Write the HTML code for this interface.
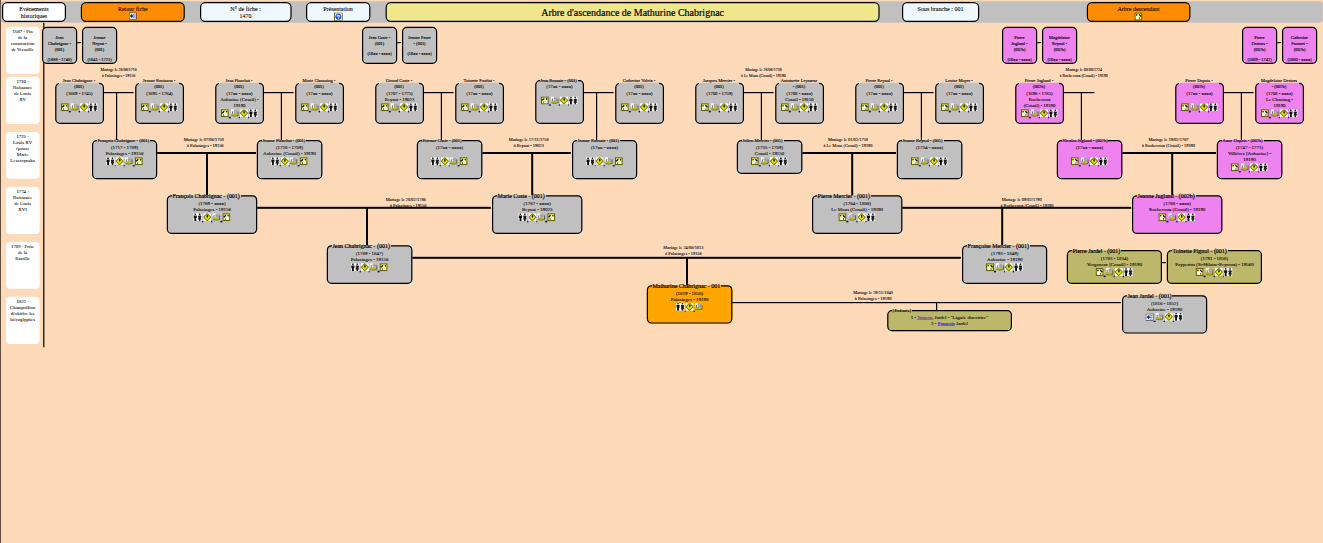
<!DOCTYPE html>
<html lang="fr"><head><meta charset="utf-8"><title>Arbre d'ascendance de Mathurine Chabrignac</title>
<style>
html,body{margin:0;padding:0;background:#ffdab9;overflow:hidden;}
body{width:1323px;height:543px;position:relative;font-family:"Liberation Serif",serif;color:#000;}
#pg{position:absolute;left:0;top:0;width:3308px;height:1358px;transform:scale(0.4);transform-origin:0 0;background:#ffdab9;font-size:13px;line-height:15px;}
#pg *{box-sizing:border-box;}
#pg{-webkit-text-stroke:0.2px;}
.g1,legend{-webkit-text-stroke:0.3px;}
.ev{-webkit-text-stroke:0.12px;}
.abs{position:absolute;}
.ln{position:absolute;background:#000;}
.bar{position:absolute;left:2px;top:3px;width:3305px;height:54px;background:#c0c0c0;border-radius:8px;}
.btn{position:absolute;top:5px;height:50px;border:3px solid #000;border-radius:13px;text-align:center;font-size:15px;line-height:17px;padding-top:7px;white-space:nowrap;}
.ev{position:absolute;left:14.5px;width:84px;height:117.500px;background:#fff;border-radius:10px;text-align:center;font-size:12px;line-height:15px;padding:4.5px 0 0 0;white-space:nowrap;}
fieldset{position:absolute;margin:0;border:3px solid #000;border-radius:12px;background:#c0c0c0;text-align:center;font-size:12px;line-height:15px;padding:2px 9px 0 9px;min-width:0;white-space:nowrap;}
legend{padding:0 2px;font-size:11.2px;line-height:15px;text-align:left;}
legend.big{font-size:14.9px;line-height:17px;-webkit-text-stroke:0.45px;}
.dn{position:relative;top:1.5px;}
legend.w{width:100px;margin-left:-1.25px;text-align:center;}
.g1{position:absolute;top:67px;width:87.5px;height:92.5px;border:3px solid #000;border-radius:12px;background:#c0c0c0;text-align:center;font-size:11px;line-height:15px;padding:16px 0 0 0;white-space:nowrap;}
.g1 p{margin:10px 0 0 0;}
fieldset.b{font-size:12.4px;}
.pk{background:#ee82ee;}
.ol{background:#bdb76b;}
.or{background:#ffa500;}
.mt{position:absolute;white-space:nowrap;text-align:center;font-size:11px;line-height:15px;transform:translateX(-50%);}
.ic{width:20px;height:20px;vertical-align:baseline;display:inline-block;}
.icq{width:22px;height:22px;vertical-align:baseline;display:inline-block;}
a{color:#0000ee;text-decoration:underline;}
.icl a{text-decoration:none;}
.btn a{text-decoration:none;}
.btn svg{position:relative;top:-1.5px;}
.btn .icq{left:0.5px;}
.sp{display:inline-block;width:2.6px;height:3.500px;background:#00005c;vertical-align:-3px;}
a.v{color:#551a8b;}
.icl{display:block;margin-top:2px;line-height:15px;padding-right:1.5px;}
</style></head><body><div id="pg">

<div class="ln" style="left:0;top:0;width:2px;height:1358px;background:#3a2a20"></div>
<div class="bar"></div>
<div class="btn" style="left:5px;width:160px;background:#fff">Evénements<br>historiques</div>
<div class="btn" style="left:202px;width:260px;background:#ff8c00">Retour fiche<br><a href="#"><svg class="ic" style="height:18px" viewBox="0 0 20 18"><rect width="20" height="18" fill="#0c1230"/><rect x="1.600" y="1.600" width="16.800" height="14.800" fill="#fff"/><path d="M9.500 3.200h8v2.200h-8zM11.500 7.900h6v2.200h-6zM9.500 12.600h8v2.200h-8z" fill="#3a5cd6"/><path d="M2.600 9l5.800-5.600v3.600h3v4h-3v3.600z" fill="#10247a"/></svg></a></div>
<div class="btn" style="left:499.5px;width:229px;background:#f0f8ff">N° de fiche :<br>1470</div>
<div class="btn" style="left:764.5px;width:161px;background:#f0f8ff">Présentation<br><a href="#"><svg class="icq" viewBox="0 0 22 22"><rect width="22" height="22" fill="#5a5a06"/><rect x="2.200" y="2.200" width="17.600" height="17.600" fill="#ffffc0"/><circle cx="11" cy="11" r="7.600" fill="#1f50d0"/><circle cx="9" cy="8.500" r="3.500" fill="#5c8cf0"/><text x="11" y="16" font-family="Liberation Sans, sans-serif" font-weight="bold" font-size="14" fill="#fff" text-anchor="middle" style="-webkit-text-stroke:0">?</text></svg></a></div>
<div class="btn" style="left:964px;width:1235px;background:#f0e68c"><span id="ttl" style="font-size:25px;line-height:34px;-webkit-text-stroke:0.5px #000;">Arbre d'ascendance de Mathurine Chabrignac</span></div>
<div class="btn" style="left:2254.5px;width:193.5px;background:#f0f8ff">Sous branche : 001</div>
<div class="btn" style="left:2717px;width:258.5px;background:#ff8c00">Arbre descendant<br><a href="#"><svg class="ic" viewBox="0 0 20 20"><rect width="20" height="20" fill="#62620a"/><rect x="3" y="3" width="14" height="14" fill="#ffff58"/><path d="M4 17v-5.500l5.500-5.500 5.500 5.500v5.500z" fill="#f8f8f0"/><path d="M16.500 10l-5-5" stroke="#0c0c00" stroke-width="3.200"/><circle cx="5.700" cy="6.300" r="2" fill="#1e1e08"/><rect x="11.600" y="12.500" width="2.400" height="4.500" fill="#5a5a30"/></svg></a></div>
<div class="ev" style="top:67px">1687 - Fin<br>de la<br>construction<br>de Versaille</div>
<div class="ev" style="top:192px">1710 -<br>Naissance<br>de Louis<br>XV</div>
<div class="ev" style="top:329.5px">1725 -<br>Louis XV<br>épouse<br>Marie<br>Leszczynska</div>
<div class="ev" style="top:467px">1774 -<br>Naissance<br>de Louis<br>XVI</div>
<div class="ev" style="top:604.5px">1789 - Prise<br>de la<br>Bastille</div>
<div class="ev" style="top:742px">1822 -<br>Champollion<br>déchiffre les<br>hiéroglyphes</div>
<div class="ln" style="left:107.5px;top:57px;width:3px;height:811px"></div>
<div class="g1 " style="left:105px">Jean<br>Chabrignac -<br>(001)<p>(1688 - 1740)</p></div>
<div class="ln" style="left:192.5px;top:104.5px;width:9.5px;height:3px"></div>
<div class="g1 " style="left:205px">Jeanne<br>Neyrat -<br>(001)<p>(1641 - 1721)</p></div>
<div class="g1 " style="left:905px">Jean Coste -<br>(001)<p>(16xx - xxxx)</p></div>
<div class="ln" style="left:992.5px;top:104.5px;width:9.5px;height:3px"></div>
<div class="g1 " style="left:1005px">Jeanne Faure<br>- (001)<p>(16xx - xxxx)</p></div>
<div class="g1 pk" style="left:2505px">Pierre<br>Jugland -<br>(002b)<p>(16xx - xxxx)</p></div>
<div class="ln" style="left:2592.5px;top:104.5px;width:9.5px;height:3px"></div>
<div class="g1 pk" style="left:2605px">Magdelaine<br>Reynal -<br>(002b)<p>(16xx - xxxx)</p></div>
<div class="g1 pk" style="left:3105px">Pierre<br>Destors -<br>(002b)<p>(1669 - 1742)</p></div>
<div class="ln" style="left:3192.5px;top:104.5px;width:9.5px;height:3px"></div>
<div class="g1 pk" style="left:3205px">Catherine<br>Fournet -<br>(002b)<p>(1680 - xxxx)</p></div>
<fieldset class="" style="left:137.5px;top:194px;width:122.5px;height:116px;padding:4.5px 8px 0 8px"><legend class="w" style="line-height:14px">Jean Chabrignac -<br>(001)</legend>(1669 - 1745)<br>&nbsp;<br><span class="icl" style="margin-top:1px"><a href="#"><svg class="ic" viewBox="0 0 20 20"><rect width="20" height="20" fill="#62620a"/><rect x="3" y="3" width="14" height="14" fill="#ffff58"/><path d="M5 17v-5.500l5.500-5.500 5.500 5.500v5.500z" fill="#f8f8f0"/><path d="M3.500 10l5-5" stroke="#0c0c00" stroke-width="3.200"/><circle cx="14.300" cy="6.300" r="2" fill="#1e1e08"/><rect x="6" y="12.500" width="2.400" height="4.500" fill="#5a5a30"/></svg><i class="sp" style="width:5px"></i></a><a href="#"><svg class="ic" viewBox="0 0 20 20"><rect x="0" y="0" width="8" height="10.500" fill="#fff"/><rect x="8" y="2.500" width="9.500" height="8.500" fill="#b4b4b4"/><path d="M10.500 3v7.500M13.500 3v7.500" stroke="#8c8c8c" stroke-width="1.200"/><path d="M4 5.500v6" stroke="#505050" stroke-width="2.200"/><path d="M4 5.200h5" stroke="#8c8c8c" stroke-width="1.200"/><ellipse cx="9.500" cy="14.800" rx="8.800" ry="2.900" fill="#b6b60a"/><path d="M1 15.800q8.500 4 17.500 0" fill="none" stroke="#5c5c08" stroke-width="1.500"/><rect x="17.300" y="5.500" width="2" height="10.500" fill="#3c3c10"/></svg><i class="sp"></i></a><a href="#"><svg class="ic" viewBox="0 0 20 20"><rect width="20" height="20" fill="#fff"/><path d="M10 1l9 9-9 9-9-9z" fill="#e8e812" stroke="#7e7e00" stroke-width="2.600"/><ellipse cx="10.300" cy="7.600" rx="2.100" ry="2.900" fill="#141400"/><path d="M10.300 9v3.500" stroke="#3c3c00" stroke-width="1.500"/></svg><i class="sp"></i></a><a href="#"><svg class="ic" style="width:22px" viewBox="0 0 22 20"><rect x="0" y="0" width="22" height="20" fill="#fff"/><circle cx="5.200" cy="2.400" r="2.100" fill="#0c0c0c"/><path d="M1.300 5.600h7.800v6.400h-1.500v8h-4.800v-8h-1.500z" fill="#0c0c0c"/><circle cx="16.200" cy="2.400" r="2.100" fill="#1c1c1c"/><path d="M13 5.600h6.400l1.300 4.400h-1.700l1.700 6h-2.600v4h-3.800v-4h-2.600l1.700-6h-1.700z" fill="#1c1c1c"/></svg></a></span></fieldset>
<fieldset class="" style="left:337.5px;top:194px;width:122.5px;height:116px;padding:4.5px 8px 0 8px"><legend class="w" style="line-height:14px">Jeanne Bouisson -<br>(001)</legend>(1695 - 1764)<br>&nbsp;<br><span class="icl" style="margin-top:1px"><a href="#"><svg class="ic" viewBox="0 0 20 20"><rect width="20" height="20" fill="#62620a"/><rect x="3" y="3" width="14" height="14" fill="#ffff58"/><path d="M5 17v-5.500l5.500-5.500 5.500 5.500v5.500z" fill="#f8f8f0"/><path d="M3.500 10l5-5" stroke="#0c0c00" stroke-width="3.200"/><circle cx="14.300" cy="6.300" r="2" fill="#1e1e08"/><rect x="6" y="12.500" width="2.400" height="4.500" fill="#5a5a30"/></svg><i class="sp" style="width:5px"></i></a><a href="#"><svg class="ic" viewBox="0 0 20 20"><rect x="0" y="0" width="8" height="10.500" fill="#fff"/><rect x="8" y="2.500" width="9.500" height="8.500" fill="#b4b4b4"/><path d="M10.500 3v7.500M13.500 3v7.500" stroke="#8c8c8c" stroke-width="1.200"/><path d="M4 5.500v6" stroke="#505050" stroke-width="2.200"/><path d="M4 5.200h5" stroke="#8c8c8c" stroke-width="1.200"/><ellipse cx="9.500" cy="14.800" rx="8.800" ry="2.900" fill="#b6b60a"/><path d="M1 15.800q8.500 4 17.500 0" fill="none" stroke="#5c5c08" stroke-width="1.500"/><rect x="17.300" y="5.500" width="2" height="10.500" fill="#3c3c10"/></svg><i class="sp"></i></a><a href="#"><svg class="ic" viewBox="0 0 20 20"><rect width="20" height="20" fill="#fff"/><path d="M10 1l9 9-9 9-9-9z" fill="#e8e812" stroke="#7e7e00" stroke-width="2.600"/><ellipse cx="10.300" cy="7.600" rx="2.100" ry="2.900" fill="#141400"/><path d="M10.300 9v3.500" stroke="#3c3c00" stroke-width="1.500"/></svg><i class="sp"></i></a><a href="#"><svg class="ic" style="width:22px" viewBox="0 0 22 20"><rect x="0" y="0" width="22" height="20" fill="#fff"/><circle cx="5.200" cy="2.400" r="2.100" fill="#0c0c0c"/><path d="M1.300 5.600h7.800v6.400h-1.500v8h-4.800v-8h-1.500z" fill="#0c0c0c"/><circle cx="16.200" cy="2.400" r="2.100" fill="#1c1c1c"/><path d="M13 5.600h6.400l1.300 4.400h-1.700l1.700 6h-2.600v4h-3.800v-4h-2.600l1.700-6h-1.700z" fill="#1c1c1c"/></svg></a></span></fieldset>
<fieldset class="" style="left:537.5px;top:194px;width:122.5px;height:116px;padding:4.5px 8px 0 8px"><legend class="w" style="line-height:14px">Jean Planchat -<br>(001)</legend>(17xx - xxxx)<br>Aubazine (Cosnil) -<br>19190<br><span class="icl" style="margin-top:1px"><a href="#"><svg class="ic" viewBox="0 0 20 20"><rect width="20" height="20" fill="#62620a"/><rect x="3" y="3" width="14" height="14" fill="#ffff58"/><path d="M5 17v-5.500l5.500-5.500 5.500 5.500v5.500z" fill="#f8f8f0"/><path d="M3.500 10l5-5" stroke="#0c0c00" stroke-width="3.200"/><circle cx="14.300" cy="6.300" r="2" fill="#1e1e08"/><rect x="6" y="12.500" width="2.400" height="4.500" fill="#5a5a30"/></svg><i class="sp" style="width:5px"></i></a><a href="#"><svg class="ic" viewBox="0 0 20 20"><rect x="0" y="0" width="8" height="10.500" fill="#fff"/><rect x="8" y="2.500" width="9.500" height="8.500" fill="#b4b4b4"/><path d="M10.500 3v7.500M13.500 3v7.500" stroke="#8c8c8c" stroke-width="1.200"/><path d="M4 5.500v6" stroke="#505050" stroke-width="2.200"/><path d="M4 5.200h5" stroke="#8c8c8c" stroke-width="1.200"/><ellipse cx="9.500" cy="14.800" rx="8.800" ry="2.900" fill="#b6b60a"/><path d="M1 15.800q8.500 4 17.500 0" fill="none" stroke="#5c5c08" stroke-width="1.500"/><rect x="17.300" y="5.500" width="2" height="10.500" fill="#3c3c10"/></svg><i class="sp"></i></a><a href="#"><svg class="ic" viewBox="0 0 20 20"><rect width="20" height="20" fill="#fff"/><path d="M10 1l9 9-9 9-9-9z" fill="#e8e812" stroke="#7e7e00" stroke-width="2.600"/><ellipse cx="10.300" cy="7.600" rx="2.100" ry="2.900" fill="#141400"/><path d="M10.300 9v3.500" stroke="#3c3c00" stroke-width="1.500"/></svg><i class="sp"></i></a><a href="#"><svg class="ic" style="width:22px" viewBox="0 0 22 20"><rect x="0" y="0" width="22" height="20" fill="#fff"/><circle cx="5.200" cy="2.400" r="2.100" fill="#0c0c0c"/><path d="M1.300 5.600h7.800v6.400h-1.500v8h-4.800v-8h-1.500z" fill="#0c0c0c"/><circle cx="16.200" cy="2.400" r="2.100" fill="#1c1c1c"/><path d="M13 5.600h6.400l1.300 4.400h-1.700l1.700 6h-2.600v4h-3.800v-4h-2.600l1.700-6h-1.700z" fill="#1c1c1c"/></svg></a></span></fieldset>
<fieldset class="" style="left:737.5px;top:194px;width:122.5px;height:116px;padding:4.5px 8px 0 8px"><legend class="w" style="line-height:14px">Marie Chassaing -<br>(001)</legend>(17xx - xxxx)<br>&nbsp;<br><span class="icl" style="margin-top:1px"><a href="#"><svg class="ic" viewBox="0 0 20 20"><rect width="20" height="20" fill="#62620a"/><rect x="3" y="3" width="14" height="14" fill="#ffff58"/><path d="M5 17v-5.500l5.500-5.500 5.500 5.500v5.500z" fill="#f8f8f0"/><path d="M3.500 10l5-5" stroke="#0c0c00" stroke-width="3.200"/><circle cx="14.300" cy="6.300" r="2" fill="#1e1e08"/><rect x="6" y="12.500" width="2.400" height="4.500" fill="#5a5a30"/></svg><i class="sp" style="width:5px"></i></a><a href="#"><svg class="ic" viewBox="0 0 20 20"><rect x="0" y="0" width="8" height="10.500" fill="#fff"/><rect x="8" y="2.500" width="9.500" height="8.500" fill="#b4b4b4"/><path d="M10.500 3v7.500M13.500 3v7.500" stroke="#8c8c8c" stroke-width="1.200"/><path d="M4 5.500v6" stroke="#505050" stroke-width="2.200"/><path d="M4 5.200h5" stroke="#8c8c8c" stroke-width="1.200"/><ellipse cx="9.500" cy="14.800" rx="8.800" ry="2.900" fill="#b6b60a"/><path d="M1 15.800q8.500 4 17.500 0" fill="none" stroke="#5c5c08" stroke-width="1.500"/><rect x="17.300" y="5.500" width="2" height="10.500" fill="#3c3c10"/></svg><i class="sp"></i></a><a href="#"><svg class="ic" viewBox="0 0 20 20"><rect width="20" height="20" fill="#fff"/><path d="M10 1l9 9-9 9-9-9z" fill="#e8e812" stroke="#7e7e00" stroke-width="2.600"/><ellipse cx="10.300" cy="7.600" rx="2.100" ry="2.900" fill="#141400"/><path d="M10.300 9v3.500" stroke="#3c3c00" stroke-width="1.500"/></svg><i class="sp"></i></a><a href="#"><svg class="ic" style="width:22px" viewBox="0 0 22 20"><rect x="0" y="0" width="22" height="20" fill="#fff"/><circle cx="5.200" cy="2.400" r="2.100" fill="#0c0c0c"/><path d="M1.300 5.600h7.800v6.400h-1.500v8h-4.800v-8h-1.500z" fill="#0c0c0c"/><circle cx="16.200" cy="2.400" r="2.100" fill="#1c1c1c"/><path d="M13 5.600h6.400l1.300 4.400h-1.700l1.700 6h-2.600v4h-3.800v-4h-2.600l1.700-6h-1.700z" fill="#1c1c1c"/></svg></a></span></fieldset>
<fieldset class="" style="left:937.5px;top:194px;width:122.5px;height:116px;padding:4.5px 8px 0 8px"><legend class="w" style="line-height:14px">Giraud Coste -<br>(001)</legend>(1707 - 1775)<br>Beynat - 19023<br><span class="icl" style="margin-top:1px"><a href="#"><svg class="ic" viewBox="0 0 20 20"><rect width="20" height="20" fill="#62620a"/><rect x="3" y="3" width="14" height="14" fill="#ffff58"/><path d="M5 17v-5.500l5.500-5.500 5.500 5.500v5.500z" fill="#f8f8f0"/><path d="M3.500 10l5-5" stroke="#0c0c00" stroke-width="3.200"/><circle cx="14.300" cy="6.300" r="2" fill="#1e1e08"/><rect x="6" y="12.500" width="2.400" height="4.500" fill="#5a5a30"/></svg><i class="sp" style="width:5px"></i></a><a href="#"><svg class="ic" viewBox="0 0 20 20"><rect x="0" y="0" width="8" height="10.500" fill="#fff"/><rect x="8" y="2.500" width="9.500" height="8.500" fill="#b4b4b4"/><path d="M10.500 3v7.500M13.500 3v7.500" stroke="#8c8c8c" stroke-width="1.200"/><path d="M4 5.500v6" stroke="#505050" stroke-width="2.200"/><path d="M4 5.200h5" stroke="#8c8c8c" stroke-width="1.200"/><ellipse cx="9.500" cy="14.800" rx="8.800" ry="2.900" fill="#b6b60a"/><path d="M1 15.800q8.500 4 17.500 0" fill="none" stroke="#5c5c08" stroke-width="1.500"/><rect x="17.300" y="5.500" width="2" height="10.500" fill="#3c3c10"/></svg><i class="sp"></i></a><a href="#"><svg class="ic" viewBox="0 0 20 20"><rect width="20" height="20" fill="#fff"/><path d="M10 1l9 9-9 9-9-9z" fill="#e8e812" stroke="#7e7e00" stroke-width="2.600"/><ellipse cx="10.300" cy="7.600" rx="2.100" ry="2.900" fill="#141400"/><path d="M10.300 9v3.500" stroke="#3c3c00" stroke-width="1.500"/></svg><i class="sp"></i></a><a href="#"><svg class="ic" style="width:22px" viewBox="0 0 22 20"><rect x="0" y="0" width="22" height="20" fill="#fff"/><circle cx="5.200" cy="2.400" r="2.100" fill="#0c0c0c"/><path d="M1.300 5.600h7.800v6.400h-1.500v8h-4.800v-8h-1.500z" fill="#0c0c0c"/><circle cx="16.200" cy="2.400" r="2.100" fill="#1c1c1c"/><path d="M13 5.600h6.400l1.300 4.400h-1.700l1.700 6h-2.600v4h-3.800v-4h-2.600l1.700-6h-1.700z" fill="#1c1c1c"/></svg></a></span></fieldset>
<fieldset class="" style="left:1137.5px;top:194px;width:122.5px;height:116px;padding:4.5px 8px 0 8px"><legend class="w" style="line-height:14px">Toinette Paufiat -<br>(001)</legend>(17xx - xxxx)<br>&nbsp;<br><span class="icl" style="margin-top:1px"><a href="#"><svg class="ic" viewBox="0 0 20 20"><rect width="20" height="20" fill="#62620a"/><rect x="3" y="3" width="14" height="14" fill="#ffff58"/><path d="M5 17v-5.500l5.500-5.500 5.500 5.500v5.500z" fill="#f8f8f0"/><path d="M3.500 10l5-5" stroke="#0c0c00" stroke-width="3.200"/><circle cx="14.300" cy="6.300" r="2" fill="#1e1e08"/><rect x="6" y="12.500" width="2.400" height="4.500" fill="#5a5a30"/></svg><i class="sp" style="width:5px"></i></a><a href="#"><svg class="ic" viewBox="0 0 20 20"><rect x="0" y="0" width="8" height="10.500" fill="#fff"/><rect x="8" y="2.500" width="9.500" height="8.500" fill="#b4b4b4"/><path d="M10.500 3v7.500M13.500 3v7.500" stroke="#8c8c8c" stroke-width="1.200"/><path d="M4 5.500v6" stroke="#505050" stroke-width="2.200"/><path d="M4 5.200h5" stroke="#8c8c8c" stroke-width="1.200"/><ellipse cx="9.500" cy="14.800" rx="8.800" ry="2.900" fill="#b6b60a"/><path d="M1 15.800q8.500 4 17.500 0" fill="none" stroke="#5c5c08" stroke-width="1.500"/><rect x="17.300" y="5.500" width="2" height="10.500" fill="#3c3c10"/></svg><i class="sp"></i></a><a href="#"><svg class="ic" viewBox="0 0 20 20"><rect width="20" height="20" fill="#fff"/><path d="M10 1l9 9-9 9-9-9z" fill="#e8e812" stroke="#7e7e00" stroke-width="2.600"/><ellipse cx="10.300" cy="7.600" rx="2.100" ry="2.900" fill="#141400"/><path d="M10.300 9v3.500" stroke="#3c3c00" stroke-width="1.500"/></svg><i class="sp"></i></a><a href="#"><svg class="ic" style="width:22px" viewBox="0 0 22 20"><rect x="0" y="0" width="22" height="20" fill="#fff"/><circle cx="5.200" cy="2.400" r="2.100" fill="#0c0c0c"/><path d="M1.300 5.600h7.800v6.400h-1.500v8h-4.800v-8h-1.500z" fill="#0c0c0c"/><circle cx="16.200" cy="2.400" r="2.100" fill="#1c1c1c"/><path d="M13 5.600h6.400l1.300 4.400h-1.700l1.700 6h-2.600v4h-3.800v-4h-2.600l1.700-6h-1.700z" fill="#1c1c1c"/></svg></a></span></fieldset>
<fieldset class="" style="left:1337.5px;top:194px;width:122.5px;height:116px;padding:2px 8px 0 8px"><legend style="line-height:14px">Jean Roussie - (001)</legend>(17xx - xxxx)<br>&nbsp;<br><span class="icl" style="margin-top:1px"><a href="#"><svg class="ic" viewBox="0 0 20 20"><rect width="20" height="20" fill="#62620a"/><rect x="3" y="3" width="14" height="14" fill="#ffff58"/><path d="M5 17v-5.500l5.500-5.500 5.500 5.500v5.500z" fill="#f8f8f0"/><path d="M3.500 10l5-5" stroke="#0c0c00" stroke-width="3.200"/><circle cx="14.300" cy="6.300" r="2" fill="#1e1e08"/><rect x="6" y="12.500" width="2.400" height="4.500" fill="#5a5a30"/></svg><i class="sp" style="width:5px"></i></a><a href="#"><svg class="ic" viewBox="0 0 20 20"><rect x="0" y="0" width="8" height="10.500" fill="#fff"/><rect x="8" y="2.500" width="9.500" height="8.500" fill="#b4b4b4"/><path d="M10.500 3v7.500M13.500 3v7.500" stroke="#8c8c8c" stroke-width="1.200"/><path d="M4 5.500v6" stroke="#505050" stroke-width="2.200"/><path d="M4 5.200h5" stroke="#8c8c8c" stroke-width="1.200"/><ellipse cx="9.500" cy="14.800" rx="8.800" ry="2.900" fill="#b6b60a"/><path d="M1 15.800q8.500 4 17.500 0" fill="none" stroke="#5c5c08" stroke-width="1.500"/><rect x="17.300" y="5.500" width="2" height="10.500" fill="#3c3c10"/></svg><i class="sp"></i></a><a href="#"><svg class="ic" viewBox="0 0 20 20"><rect width="20" height="20" fill="#fff"/><path d="M10 1l9 9-9 9-9-9z" fill="#e8e812" stroke="#7e7e00" stroke-width="2.600"/><ellipse cx="10.300" cy="7.600" rx="2.100" ry="2.900" fill="#141400"/><path d="M10.300 9v3.500" stroke="#3c3c00" stroke-width="1.500"/></svg><i class="sp"></i></a><a href="#"><svg class="ic" style="width:22px" viewBox="0 0 22 20"><rect x="0" y="0" width="22" height="20" fill="#fff"/><circle cx="5.200" cy="2.400" r="2.100" fill="#0c0c0c"/><path d="M1.300 5.600h7.800v6.400h-1.500v8h-4.800v-8h-1.500z" fill="#0c0c0c"/><circle cx="16.200" cy="2.400" r="2.100" fill="#1c1c1c"/><path d="M13 5.600h6.400l1.300 4.400h-1.700l1.700 6h-2.600v4h-3.800v-4h-2.600l1.700-6h-1.700z" fill="#1c1c1c"/></svg></a></span></fieldset>
<fieldset class="" style="left:1537.5px;top:194px;width:122.5px;height:116px;padding:4.5px 8px 0 8px"><legend class="w" style="line-height:14px">Catherine Valeix -<br>(001)</legend>(17xx - xxxx)<br>&nbsp;<br><span class="icl" style="margin-top:1px"><a href="#"><svg class="ic" viewBox="0 0 20 20"><rect width="20" height="20" fill="#62620a"/><rect x="3" y="3" width="14" height="14" fill="#ffff58"/><path d="M5 17v-5.500l5.500-5.500 5.500 5.500v5.500z" fill="#f8f8f0"/><path d="M3.500 10l5-5" stroke="#0c0c00" stroke-width="3.200"/><circle cx="14.300" cy="6.300" r="2" fill="#1e1e08"/><rect x="6" y="12.500" width="2.400" height="4.500" fill="#5a5a30"/></svg><i class="sp" style="width:5px"></i></a><a href="#"><svg class="ic" viewBox="0 0 20 20"><rect x="0" y="0" width="8" height="10.500" fill="#fff"/><rect x="8" y="2.500" width="9.500" height="8.500" fill="#b4b4b4"/><path d="M10.500 3v7.500M13.500 3v7.500" stroke="#8c8c8c" stroke-width="1.200"/><path d="M4 5.500v6" stroke="#505050" stroke-width="2.200"/><path d="M4 5.200h5" stroke="#8c8c8c" stroke-width="1.200"/><ellipse cx="9.500" cy="14.800" rx="8.800" ry="2.900" fill="#b6b60a"/><path d="M1 15.800q8.500 4 17.500 0" fill="none" stroke="#5c5c08" stroke-width="1.500"/><rect x="17.300" y="5.500" width="2" height="10.500" fill="#3c3c10"/></svg><i class="sp"></i></a><a href="#"><svg class="ic" viewBox="0 0 20 20"><rect width="20" height="20" fill="#fff"/><path d="M10 1l9 9-9 9-9-9z" fill="#e8e812" stroke="#7e7e00" stroke-width="2.600"/><ellipse cx="10.300" cy="7.600" rx="2.100" ry="2.900" fill="#141400"/><path d="M10.300 9v3.500" stroke="#3c3c00" stroke-width="1.500"/></svg><i class="sp"></i></a><a href="#"><svg class="ic" style="width:22px" viewBox="0 0 22 20"><rect x="0" y="0" width="22" height="20" fill="#fff"/><circle cx="5.200" cy="2.400" r="2.100" fill="#0c0c0c"/><path d="M1.300 5.600h7.800v6.400h-1.500v8h-4.800v-8h-1.500z" fill="#0c0c0c"/><circle cx="16.200" cy="2.400" r="2.100" fill="#1c1c1c"/><path d="M13 5.600h6.400l1.300 4.400h-1.700l1.700 6h-2.600v4h-3.800v-4h-2.600l1.700-6h-1.700z" fill="#1c1c1c"/></svg></a></span></fieldset>
<fieldset class="" style="left:1737.5px;top:194px;width:122.5px;height:116px;padding:4.5px 8px 0 8px"><legend class="w" style="line-height:14px">Jacques Mercier -<br>(001)</legend>(1700 - 1759)<br>&nbsp;<br><span class="icl" style="margin-top:1px"><a href="#"><svg class="ic" viewBox="0 0 20 20"><rect width="20" height="20" fill="#62620a"/><rect x="3" y="3" width="14" height="14" fill="#ffff58"/><path d="M4 17v-5.500l5.500-5.500 5.500 5.500v5.500z" fill="#f8f8f0"/><path d="M16.500 10l-5-5" stroke="#0c0c00" stroke-width="3.200"/><circle cx="5.700" cy="6.300" r="2" fill="#1e1e08"/><rect x="11.600" y="12.500" width="2.400" height="4.500" fill="#5a5a30"/></svg><i class="sp" style="width:5px"></i></a><a href="#"><svg class="ic" viewBox="0 0 20 20"><rect x="0" y="0" width="8" height="10.500" fill="#fff"/><rect x="8" y="2.500" width="9.500" height="8.500" fill="#b4b4b4"/><path d="M10.500 3v7.500M13.500 3v7.500" stroke="#8c8c8c" stroke-width="1.200"/><path d="M4 5.500v6" stroke="#505050" stroke-width="2.200"/><path d="M4 5.200h5" stroke="#8c8c8c" stroke-width="1.200"/><ellipse cx="9.500" cy="14.800" rx="8.800" ry="2.900" fill="#b6b60a"/><path d="M1 15.800q8.500 4 17.500 0" fill="none" stroke="#5c5c08" stroke-width="1.500"/><rect x="17.300" y="5.500" width="2" height="10.500" fill="#3c3c10"/></svg><i class="sp"></i></a><a href="#"><svg class="ic" viewBox="0 0 20 20"><rect width="20" height="20" fill="#fff"/><path d="M10 1l9 9-9 9-9-9z" fill="#e8e812" stroke="#7e7e00" stroke-width="2.600"/><ellipse cx="10.300" cy="7.600" rx="2.100" ry="2.900" fill="#141400"/><path d="M10.300 9v3.500" stroke="#3c3c00" stroke-width="1.500"/></svg><i class="sp"></i></a><a href="#"><svg class="ic" style="width:22px" viewBox="0 0 22 20"><rect x="0" y="0" width="22" height="20" fill="#fff"/><circle cx="5.200" cy="2.400" r="2.100" fill="#0c0c0c"/><path d="M1.300 5.600h7.800v6.400h-1.500v8h-4.800v-8h-1.500z" fill="#0c0c0c"/><circle cx="16.200" cy="2.400" r="2.100" fill="#1c1c1c"/><path d="M13 5.600h6.400l1.300 4.400h-1.700l1.700 6h-2.600v4h-3.800v-4h-2.600l1.700-6h-1.700z" fill="#1c1c1c"/></svg></a></span></fieldset>
<fieldset class="" style="left:1937.5px;top:194px;width:122.5px;height:116px;padding:4.5px 8px 0 8px"><legend class="w" style="line-height:14px">Antoinette Leyssene<br>- (001)</legend>(1708 - xxxx)<br>Cosnil - 19150<br><span class="icl" style="margin-top:1px"><a href="#"><svg class="ic" viewBox="0 0 20 20"><rect width="20" height="20" fill="#62620a"/><rect x="3" y="3" width="14" height="14" fill="#ffff58"/><path d="M4 17v-5.500l5.500-5.500 5.500 5.500v5.500z" fill="#f8f8f0"/><path d="M16.500 10l-5-5" stroke="#0c0c00" stroke-width="3.200"/><circle cx="5.700" cy="6.300" r="2" fill="#1e1e08"/><rect x="11.600" y="12.500" width="2.400" height="4.500" fill="#5a5a30"/></svg><i class="sp" style="width:5px"></i></a><a href="#"><svg class="ic" viewBox="0 0 20 20"><rect x="0" y="0" width="8" height="10.500" fill="#fff"/><rect x="8" y="2.500" width="9.500" height="8.500" fill="#b4b4b4"/><path d="M10.500 3v7.500M13.500 3v7.500" stroke="#8c8c8c" stroke-width="1.200"/><path d="M4 5.500v6" stroke="#505050" stroke-width="2.200"/><path d="M4 5.200h5" stroke="#8c8c8c" stroke-width="1.200"/><ellipse cx="9.500" cy="14.800" rx="8.800" ry="2.900" fill="#b6b60a"/><path d="M1 15.800q8.500 4 17.500 0" fill="none" stroke="#5c5c08" stroke-width="1.500"/><rect x="17.300" y="5.500" width="2" height="10.500" fill="#3c3c10"/></svg><i class="sp"></i></a><a href="#"><svg class="ic" viewBox="0 0 20 20"><rect width="20" height="20" fill="#fff"/><path d="M10 1l9 9-9 9-9-9z" fill="#e8e812" stroke="#7e7e00" stroke-width="2.600"/><ellipse cx="10.300" cy="7.600" rx="2.100" ry="2.900" fill="#141400"/><path d="M10.300 9v3.500" stroke="#3c3c00" stroke-width="1.500"/></svg><i class="sp"></i></a><a href="#"><svg class="ic" style="width:22px" viewBox="0 0 22 20"><rect x="0" y="0" width="22" height="20" fill="#fff"/><circle cx="5.200" cy="2.400" r="2.100" fill="#0c0c0c"/><path d="M1.300 5.600h7.800v6.400h-1.500v8h-4.800v-8h-1.500z" fill="#0c0c0c"/><circle cx="16.200" cy="2.400" r="2.100" fill="#1c1c1c"/><path d="M13 5.600h6.400l1.300 4.400h-1.700l1.700 6h-2.600v4h-3.800v-4h-2.600l1.700-6h-1.700z" fill="#1c1c1c"/></svg></a></span></fieldset>
<fieldset class="" style="left:2137.5px;top:194px;width:122.5px;height:116px;padding:4.5px 8px 0 8px"><legend class="w" style="line-height:14px">Pierre Reynal -<br>(001)</legend>(17xx - xxxx)<br>&nbsp;<br><span class="icl" style="margin-top:1px"><a href="#"><svg class="ic" viewBox="0 0 20 20"><rect width="20" height="20" fill="#62620a"/><rect x="3" y="3" width="14" height="14" fill="#ffff58"/><path d="M4 17v-5.500l5.500-5.500 5.500 5.500v5.500z" fill="#f8f8f0"/><path d="M16.500 10l-5-5" stroke="#0c0c00" stroke-width="3.200"/><circle cx="5.700" cy="6.300" r="2" fill="#1e1e08"/><rect x="11.600" y="12.500" width="2.400" height="4.500" fill="#5a5a30"/></svg><i class="sp" style="width:5px"></i></a><a href="#"><svg class="ic" viewBox="0 0 20 20"><rect x="0" y="0" width="8" height="10.500" fill="#fff"/><rect x="8" y="2.500" width="9.500" height="8.500" fill="#b4b4b4"/><path d="M10.500 3v7.500M13.500 3v7.500" stroke="#8c8c8c" stroke-width="1.200"/><path d="M4 5.500v6" stroke="#505050" stroke-width="2.200"/><path d="M4 5.200h5" stroke="#8c8c8c" stroke-width="1.200"/><ellipse cx="9.500" cy="14.800" rx="8.800" ry="2.900" fill="#b6b60a"/><path d="M1 15.800q8.500 4 17.500 0" fill="none" stroke="#5c5c08" stroke-width="1.500"/><rect x="17.300" y="5.500" width="2" height="10.500" fill="#3c3c10"/></svg><i class="sp"></i></a><a href="#"><svg class="ic" viewBox="0 0 20 20"><rect width="20" height="20" fill="#fff"/><path d="M10 1l9 9-9 9-9-9z" fill="#e8e812" stroke="#7e7e00" stroke-width="2.600"/><ellipse cx="10.300" cy="7.600" rx="2.100" ry="2.900" fill="#141400"/><path d="M10.300 9v3.500" stroke="#3c3c00" stroke-width="1.500"/></svg><i class="sp"></i></a><a href="#"><svg class="ic" style="width:22px" viewBox="0 0 22 20"><rect x="0" y="0" width="22" height="20" fill="#fff"/><circle cx="5.200" cy="2.400" r="2.100" fill="#0c0c0c"/><path d="M1.300 5.600h7.800v6.400h-1.500v8h-4.800v-8h-1.500z" fill="#0c0c0c"/><circle cx="16.200" cy="2.400" r="2.100" fill="#1c1c1c"/><path d="M13 5.600h6.400l1.300 4.400h-1.700l1.700 6h-2.600v4h-3.800v-4h-2.600l1.700-6h-1.700z" fill="#1c1c1c"/></svg></a></span></fieldset>
<fieldset class="" style="left:2337.5px;top:194px;width:122.5px;height:116px;padding:4.5px 8px 0 8px"><legend class="w" style="line-height:14px">Louise Mayer -<br>(001)</legend>(17xx - xxxx)<br>&nbsp;<br><span class="icl" style="margin-top:1px"><a href="#"><svg class="ic" viewBox="0 0 20 20"><rect width="20" height="20" fill="#62620a"/><rect x="3" y="3" width="14" height="14" fill="#ffff58"/><path d="M4 17v-5.500l5.500-5.500 5.500 5.500v5.500z" fill="#f8f8f0"/><path d="M16.500 10l-5-5" stroke="#0c0c00" stroke-width="3.200"/><circle cx="5.700" cy="6.300" r="2" fill="#1e1e08"/><rect x="11.600" y="12.500" width="2.400" height="4.500" fill="#5a5a30"/></svg><i class="sp" style="width:5px"></i></a><a href="#"><svg class="ic" viewBox="0 0 20 20"><rect x="0" y="0" width="8" height="10.500" fill="#fff"/><rect x="8" y="2.500" width="9.500" height="8.500" fill="#b4b4b4"/><path d="M10.500 3v7.500M13.500 3v7.500" stroke="#8c8c8c" stroke-width="1.200"/><path d="M4 5.500v6" stroke="#505050" stroke-width="2.200"/><path d="M4 5.200h5" stroke="#8c8c8c" stroke-width="1.200"/><ellipse cx="9.500" cy="14.800" rx="8.800" ry="2.900" fill="#b6b60a"/><path d="M1 15.800q8.500 4 17.500 0" fill="none" stroke="#5c5c08" stroke-width="1.500"/><rect x="17.300" y="5.500" width="2" height="10.500" fill="#3c3c10"/></svg><i class="sp"></i></a><a href="#"><svg class="ic" viewBox="0 0 20 20"><rect width="20" height="20" fill="#fff"/><path d="M10 1l9 9-9 9-9-9z" fill="#e8e812" stroke="#7e7e00" stroke-width="2.600"/><ellipse cx="10.300" cy="7.600" rx="2.100" ry="2.900" fill="#141400"/><path d="M10.300 9v3.500" stroke="#3c3c00" stroke-width="1.500"/></svg><i class="sp"></i></a><a href="#"><svg class="ic" style="width:22px" viewBox="0 0 22 20"><rect x="0" y="0" width="22" height="20" fill="#fff"/><circle cx="5.200" cy="2.400" r="2.100" fill="#0c0c0c"/><path d="M1.300 5.600h7.800v6.400h-1.500v8h-4.800v-8h-1.500z" fill="#0c0c0c"/><circle cx="16.200" cy="2.400" r="2.100" fill="#1c1c1c"/><path d="M13 5.600h6.400l1.300 4.400h-1.700l1.700 6h-2.600v4h-3.800v-4h-2.600l1.700-6h-1.700z" fill="#1c1c1c"/></svg></a></span></fieldset>
<fieldset class="pk" style="left:2537.5px;top:194px;width:122.5px;height:116px;padding:4.5px 8px 0 8px"><legend class="w" style="line-height:14px">Pierre Jugland -<br>(002b)</legend>(1696 - 1765)<br>Rochecoux<br>(Cosnil) - 19190<br><span class="icl" style="margin-top:1px"><a href="#"><svg class="ic" viewBox="0 0 20 20"><rect width="20" height="20" fill="#62620a"/><rect x="3" y="3" width="14" height="14" fill="#ffff58"/><path d="M4 17v-5.500l5.500-5.500 5.500 5.500v5.500z" fill="#f8f8f0"/><path d="M16.500 10l-5-5" stroke="#0c0c00" stroke-width="3.200"/><circle cx="5.700" cy="6.300" r="2" fill="#1e1e08"/><rect x="11.600" y="12.500" width="2.400" height="4.500" fill="#5a5a30"/></svg><i class="sp" style="width:5px"></i></a><a href="#"><svg class="ic" viewBox="0 0 20 20"><rect x="0" y="0" width="8" height="10.500" fill="#fff"/><rect x="8" y="2.500" width="9.500" height="8.500" fill="#b4b4b4"/><path d="M10.500 3v7.500M13.500 3v7.500" stroke="#8c8c8c" stroke-width="1.200"/><path d="M4 5.500v6" stroke="#505050" stroke-width="2.200"/><path d="M4 5.200h5" stroke="#8c8c8c" stroke-width="1.200"/><ellipse cx="9.500" cy="14.800" rx="8.800" ry="2.900" fill="#b6b60a"/><path d="M1 15.800q8.500 4 17.500 0" fill="none" stroke="#5c5c08" stroke-width="1.500"/><rect x="17.300" y="5.500" width="2" height="10.500" fill="#3c3c10"/></svg><i class="sp"></i></a><a href="#"><svg class="ic" viewBox="0 0 20 20"><rect width="20" height="20" fill="#fff"/><path d="M10 1l9 9-9 9-9-9z" fill="#e8e812" stroke="#7e7e00" stroke-width="2.600"/><ellipse cx="10.300" cy="7.600" rx="2.100" ry="2.900" fill="#141400"/><path d="M10.300 9v3.500" stroke="#3c3c00" stroke-width="1.500"/></svg><i class="sp"></i></a><a href="#"><svg class="ic" style="width:22px" viewBox="0 0 22 20"><rect x="0" y="0" width="22" height="20" fill="#fff"/><circle cx="5.200" cy="2.400" r="2.100" fill="#0c0c0c"/><path d="M1.300 5.600h7.800v6.400h-1.500v8h-4.800v-8h-1.500z" fill="#0c0c0c"/><circle cx="16.200" cy="2.400" r="2.100" fill="#1c1c1c"/><path d="M13 5.600h6.400l1.300 4.400h-1.700l1.700 6h-2.600v4h-3.800v-4h-2.600l1.700-6h-1.700z" fill="#1c1c1c"/></svg></a></span></fieldset>
<fieldset class="pk" style="left:2937.5px;top:194px;width:122.5px;height:116px;padding:4.5px 8px 0 8px"><legend class="w" style="line-height:14px">Pierre Dupuis -<br>(002b)</legend>(17xx - xxxx)<br>&nbsp;<br><span class="icl" style="margin-top:1px"><a href="#"><svg class="ic" viewBox="0 0 20 20"><rect width="20" height="20" fill="#62620a"/><rect x="3" y="3" width="14" height="14" fill="#ffff58"/><path d="M4 17v-5.500l5.500-5.500 5.500 5.500v5.500z" fill="#f8f8f0"/><path d="M16.500 10l-5-5" stroke="#0c0c00" stroke-width="3.200"/><circle cx="5.700" cy="6.300" r="2" fill="#1e1e08"/><rect x="11.600" y="12.500" width="2.400" height="4.500" fill="#5a5a30"/></svg><i class="sp" style="width:5px"></i></a><a href="#"><svg class="ic" viewBox="0 0 20 20"><rect x="0" y="0" width="8" height="10.500" fill="#fff"/><rect x="8" y="2.500" width="9.500" height="8.500" fill="#b4b4b4"/><path d="M10.500 3v7.500M13.500 3v7.500" stroke="#8c8c8c" stroke-width="1.200"/><path d="M4 5.500v6" stroke="#505050" stroke-width="2.200"/><path d="M4 5.200h5" stroke="#8c8c8c" stroke-width="1.200"/><ellipse cx="9.500" cy="14.800" rx="8.800" ry="2.900" fill="#b6b60a"/><path d="M1 15.800q8.500 4 17.500 0" fill="none" stroke="#5c5c08" stroke-width="1.500"/><rect x="17.300" y="5.500" width="2" height="10.500" fill="#3c3c10"/></svg><i class="sp"></i></a><a href="#"><svg class="ic" viewBox="0 0 20 20"><rect width="20" height="20" fill="#fff"/><path d="M10 1l9 9-9 9-9-9z" fill="#e8e812" stroke="#7e7e00" stroke-width="2.600"/><ellipse cx="10.300" cy="7.600" rx="2.100" ry="2.900" fill="#141400"/><path d="M10.300 9v3.500" stroke="#3c3c00" stroke-width="1.500"/></svg><i class="sp"></i></a><a href="#"><svg class="ic" style="width:22px" viewBox="0 0 22 20"><rect x="0" y="0" width="22" height="20" fill="#fff"/><circle cx="5.200" cy="2.400" r="2.100" fill="#0c0c0c"/><path d="M1.300 5.600h7.800v6.400h-1.500v8h-4.800v-8h-1.500z" fill="#0c0c0c"/><circle cx="16.200" cy="2.400" r="2.100" fill="#1c1c1c"/><path d="M13 5.600h6.400l1.300 4.400h-1.700l1.700 6h-2.600v4h-3.800v-4h-2.600l1.700-6h-1.700z" fill="#1c1c1c"/></svg></a></span></fieldset>
<fieldset class="pk" style="left:3137.5px;top:194px;width:122.5px;height:116px;padding:4.5px 8px 0 8px"><legend class="w" style="line-height:14px">Magdelaine Destors<br>- (002b)</legend>(1708 - xxxx)<br>Le Chastang -<br>19190<br><span class="icl" style="margin-top:1px"><a href="#"><svg class="ic" viewBox="0 0 20 20"><rect width="20" height="20" fill="#62620a"/><rect x="3" y="3" width="14" height="14" fill="#ffff58"/><path d="M4 17v-5.500l5.500-5.500 5.500 5.500v5.500z" fill="#f8f8f0"/><path d="M16.500 10l-5-5" stroke="#0c0c00" stroke-width="3.200"/><circle cx="5.700" cy="6.300" r="2" fill="#1e1e08"/><rect x="11.600" y="12.500" width="2.400" height="4.500" fill="#5a5a30"/></svg><i class="sp" style="width:5px"></i></a><a href="#"><svg class="ic" viewBox="0 0 20 20"><rect x="0" y="0" width="8" height="10.500" fill="#fff"/><rect x="8" y="2.500" width="9.500" height="8.500" fill="#b4b4b4"/><path d="M10.500 3v7.500M13.500 3v7.500" stroke="#8c8c8c" stroke-width="1.200"/><path d="M4 5.500v6" stroke="#505050" stroke-width="2.200"/><path d="M4 5.200h5" stroke="#8c8c8c" stroke-width="1.200"/><ellipse cx="9.500" cy="14.800" rx="8.800" ry="2.900" fill="#b6b60a"/><path d="M1 15.800q8.500 4 17.500 0" fill="none" stroke="#5c5c08" stroke-width="1.500"/><rect x="17.300" y="5.500" width="2" height="10.500" fill="#3c3c10"/></svg><i class="sp"></i></a><a href="#"><svg class="ic" viewBox="0 0 20 20"><rect width="20" height="20" fill="#fff"/><path d="M10 1l9 9-9 9-9-9z" fill="#e8e812" stroke="#7e7e00" stroke-width="2.600"/><ellipse cx="10.300" cy="7.600" rx="2.100" ry="2.900" fill="#141400"/><path d="M10.300 9v3.500" stroke="#3c3c00" stroke-width="1.500"/></svg><i class="sp"></i></a><a href="#"><svg class="ic" style="width:22px" viewBox="0 0 22 20"><rect x="0" y="0" width="22" height="20" fill="#fff"/><circle cx="5.200" cy="2.400" r="2.100" fill="#0c0c0c"/><path d="M1.300 5.600h7.800v6.400h-1.500v8h-4.800v-8h-1.500z" fill="#0c0c0c"/><circle cx="16.200" cy="2.400" r="2.100" fill="#1c1c1c"/><path d="M13 5.600h6.400l1.300 4.400h-1.700l1.700 6h-2.600v4h-3.800v-4h-2.600l1.700-6h-1.700z" fill="#1c1c1c"/></svg></a></span></fieldset>
<div class="ln" style="left:260px;top:229.5px;width:74px;height:3px"></div>
<div class="ln" style="left:289.75px;top:231px;width:3px;height:120px"></div>
<div class="ln" style="left:660px;top:229.5px;width:74px;height:3px"></div>
<div class="ln" style="left:702.25px;top:231px;width:3px;height:120px"></div>
<div class="ln" style="left:1060px;top:229.5px;width:74px;height:3px"></div>
<div class="ln" style="left:1102.25px;top:231px;width:3px;height:120px"></div>
<div class="ln" style="left:1460px;top:229.5px;width:74px;height:3px"></div>
<div class="ln" style="left:1489.75px;top:231px;width:3px;height:120px"></div>
<div class="ln" style="left:1860px;top:229.5px;width:74px;height:3px"></div>
<div class="ln" style="left:1902.25px;top:231px;width:3px;height:120px"></div>
<div class="ln" style="left:2260px;top:229.5px;width:74px;height:3px"></div>
<div class="ln" style="left:2302.25px;top:231px;width:3px;height:120px"></div>
<div class="ln" style="left:2660px;top:229.5px;width:76px;height:3px"></div>
<div class="ln" style="left:2702.25px;top:231px;width:3px;height:120px"></div>
<div class="ln" style="left:3060px;top:229.5px;width:74px;height:3px"></div>
<div class="ln" style="left:3102.25px;top:231px;width:3px;height:120px"></div>
<fieldset class=" b" style="left:229.75px;top:344px;width:163.3px;height:103.5px;padding:2px 9px 0 9px"><legend style="font-size:11.4px">François Chabrignac - (001)</legend>(1717 - 1789)<br>Palazinges - 19156<br><span class="icl" style="margin-top:2px"><a href="#"><svg class="ic" style="width:22px" viewBox="0 0 22 20"><rect x="0" y="0" width="22" height="20" fill="#fff"/><circle cx="5.200" cy="2.400" r="2.100" fill="#0c0c0c"/><path d="M1.300 5.600h7.800v6.400h-1.500v8h-4.800v-8h-1.500z" fill="#0c0c0c"/><circle cx="16.200" cy="2.400" r="2.100" fill="#1c1c1c"/><path d="M13 5.600h6.400l1.300 4.400h-1.700l1.700 6h-2.600v4h-3.800v-4h-2.600l1.700-6h-1.700z" fill="#1c1c1c"/></svg><i class="sp"></i></a><a href="#"><svg class="ic" viewBox="0 0 20 20"><rect width="20" height="20" fill="#fff"/><path d="M10 1l9 9-9 9-9-9z" fill="#e8e812" stroke="#7e7e00" stroke-width="2.600"/><ellipse cx="10.300" cy="7.600" rx="2.100" ry="2.900" fill="#141400"/><path d="M10.300 9v3.500" stroke="#3c3c00" stroke-width="1.500"/></svg><i class="sp"></i></a><a href="#"><svg class="ic" viewBox="0 0 20 20"><rect x="0" y="0" width="8" height="10.500" fill="#fff"/><rect x="8" y="2.500" width="9.500" height="8.500" fill="#b4b4b4"/><path d="M10.500 3v7.500M13.500 3v7.500" stroke="#8c8c8c" stroke-width="1.200"/><path d="M4 5.500v6" stroke="#505050" stroke-width="2.200"/><path d="M4 5.200h5" stroke="#8c8c8c" stroke-width="1.200"/><ellipse cx="9.500" cy="14.800" rx="8.800" ry="2.900" fill="#b6b60a"/><path d="M1 15.800q8.500 4 17.500 0" fill="none" stroke="#5c5c08" stroke-width="1.500"/><rect x="17.300" y="5.500" width="2" height="10.500" fill="#3c3c10"/></svg><i class="sp" style="width:5px"></i></a><a href="#"><svg class="ic" viewBox="0 0 20 20"><rect width="20" height="20" fill="#62620a"/><rect x="3" y="3" width="14" height="14" fill="#ffff58"/><path d="M5 17v-5.500l5.500-5.500 5.500 5.500v5.500z" fill="#f8f8f0"/><path d="M3.500 10l5-5" stroke="#0c0c00" stroke-width="3.200"/><circle cx="14.300" cy="6.300" r="2" fill="#1e1e08"/><rect x="6" y="12.500" width="2.400" height="4.500" fill="#5a5a30"/></svg></a></span></fieldset>
<fieldset class=" b" style="left:642.25px;top:344px;width:163.3px;height:103.5px;padding:2px 9px 0 9px"><legend style="font-size:11.4px">Jeanne Planchat - (001)</legend>(1728 - 1789)<br>Aubazine (Cosnil) - 19190<br><span class="icl" style="margin-top:2px"><a href="#"><svg class="ic" style="width:22px" viewBox="0 0 22 20"><rect x="0" y="0" width="22" height="20" fill="#fff"/><circle cx="5.200" cy="2.400" r="2.100" fill="#0c0c0c"/><path d="M1.300 5.600h7.800v6.400h-1.500v8h-4.800v-8h-1.500z" fill="#0c0c0c"/><circle cx="16.200" cy="2.400" r="2.100" fill="#1c1c1c"/><path d="M13 5.600h6.400l1.300 4.400h-1.700l1.700 6h-2.600v4h-3.800v-4h-2.600l1.700-6h-1.700z" fill="#1c1c1c"/></svg><i class="sp"></i></a><a href="#"><svg class="ic" viewBox="0 0 20 20"><rect width="20" height="20" fill="#fff"/><path d="M10 1l9 9-9 9-9-9z" fill="#e8e812" stroke="#7e7e00" stroke-width="2.600"/><ellipse cx="10.300" cy="7.600" rx="2.100" ry="2.900" fill="#141400"/><path d="M10.300 9v3.500" stroke="#3c3c00" stroke-width="1.500"/></svg><i class="sp"></i></a><a href="#"><svg class="ic" viewBox="0 0 20 20"><rect x="0" y="0" width="8" height="10.500" fill="#fff"/><rect x="8" y="2.500" width="9.500" height="8.500" fill="#b4b4b4"/><path d="M10.500 3v7.500M13.500 3v7.500" stroke="#8c8c8c" stroke-width="1.200"/><path d="M4 5.500v6" stroke="#505050" stroke-width="2.200"/><path d="M4 5.200h5" stroke="#8c8c8c" stroke-width="1.200"/><ellipse cx="9.500" cy="14.800" rx="8.800" ry="2.900" fill="#b6b60a"/><path d="M1 15.800q8.500 4 17.500 0" fill="none" stroke="#5c5c08" stroke-width="1.500"/><rect x="17.300" y="5.500" width="2" height="10.500" fill="#3c3c10"/></svg><i class="sp" style="width:5px"></i></a><a href="#"><svg class="ic" viewBox="0 0 20 20"><rect width="20" height="20" fill="#62620a"/><rect x="3" y="3" width="14" height="14" fill="#ffff58"/><path d="M5 17v-5.500l5.500-5.500 5.500 5.500v5.500z" fill="#f8f8f0"/><path d="M3.500 10l5-5" stroke="#0c0c00" stroke-width="3.200"/><circle cx="14.300" cy="6.300" r="2" fill="#1e1e08"/><rect x="6" y="12.500" width="2.400" height="4.500" fill="#5a5a30"/></svg></a></span></fieldset>
<fieldset class=" b" style="left:1042.25px;top:344px;width:163.3px;height:103.5px;padding:2px 9px 0 9px"><legend style="font-size:11.4px">Etienne Coste - (001)</legend>(17xx - xxxx)<br>&nbsp;<br><span class="icl" style="margin-top:2px"><a href="#"><svg class="ic" style="width:22px" viewBox="0 0 22 20"><rect x="0" y="0" width="22" height="20" fill="#fff"/><circle cx="5.200" cy="2.400" r="2.100" fill="#0c0c0c"/><path d="M1.300 5.600h7.800v6.400h-1.500v8h-4.800v-8h-1.500z" fill="#0c0c0c"/><circle cx="16.200" cy="2.400" r="2.100" fill="#1c1c1c"/><path d="M13 5.600h6.400l1.300 4.400h-1.700l1.700 6h-2.600v4h-3.800v-4h-2.600l1.700-6h-1.700z" fill="#1c1c1c"/></svg><i class="sp"></i></a><a href="#"><svg class="ic" viewBox="0 0 20 20"><rect width="20" height="20" fill="#fff"/><path d="M10 1l9 9-9 9-9-9z" fill="#e8e812" stroke="#7e7e00" stroke-width="2.600"/><ellipse cx="10.300" cy="7.600" rx="2.100" ry="2.900" fill="#141400"/><path d="M10.300 9v3.500" stroke="#3c3c00" stroke-width="1.500"/></svg><i class="sp"></i></a><a href="#"><svg class="ic" viewBox="0 0 20 20"><rect x="0" y="0" width="8" height="10.500" fill="#fff"/><rect x="8" y="2.500" width="9.500" height="8.500" fill="#b4b4b4"/><path d="M10.500 3v7.500M13.500 3v7.500" stroke="#8c8c8c" stroke-width="1.200"/><path d="M4 5.500v6" stroke="#505050" stroke-width="2.200"/><path d="M4 5.200h5" stroke="#8c8c8c" stroke-width="1.200"/><ellipse cx="9.500" cy="14.800" rx="8.800" ry="2.900" fill="#b6b60a"/><path d="M1 15.800q8.500 4 17.500 0" fill="none" stroke="#5c5c08" stroke-width="1.500"/><rect x="17.300" y="5.500" width="2" height="10.500" fill="#3c3c10"/></svg><i class="sp" style="width:5px"></i></a><a href="#"><svg class="ic" viewBox="0 0 20 20"><rect width="20" height="20" fill="#62620a"/><rect x="3" y="3" width="14" height="14" fill="#ffff58"/><path d="M5 17v-5.500l5.500-5.500 5.500 5.500v5.500z" fill="#f8f8f0"/><path d="M3.500 10l5-5" stroke="#0c0c00" stroke-width="3.200"/><circle cx="14.300" cy="6.300" r="2" fill="#1e1e08"/><rect x="6" y="12.500" width="2.400" height="4.500" fill="#5a5a30"/></svg></a></span></fieldset>
<fieldset class=" b" style="left:1429.75px;top:344px;width:163.3px;height:103.5px;padding:2px 9px 0 9px"><legend style="font-size:11.4px">Jeanne Roussie - (001)</legend>(17xx - xxxx)<br>&nbsp;<br><span class="icl" style="margin-top:2px"><a href="#"><svg class="ic" style="width:22px" viewBox="0 0 22 20"><rect x="0" y="0" width="22" height="20" fill="#fff"/><circle cx="5.200" cy="2.400" r="2.100" fill="#0c0c0c"/><path d="M1.300 5.600h7.800v6.400h-1.500v8h-4.800v-8h-1.500z" fill="#0c0c0c"/><circle cx="16.200" cy="2.400" r="2.100" fill="#1c1c1c"/><path d="M13 5.600h6.400l1.300 4.400h-1.700l1.700 6h-2.600v4h-3.800v-4h-2.600l1.700-6h-1.700z" fill="#1c1c1c"/></svg><i class="sp"></i></a><a href="#"><svg class="ic" viewBox="0 0 20 20"><rect width="20" height="20" fill="#fff"/><path d="M10 1l9 9-9 9-9-9z" fill="#e8e812" stroke="#7e7e00" stroke-width="2.600"/><ellipse cx="10.300" cy="7.600" rx="2.100" ry="2.900" fill="#141400"/><path d="M10.300 9v3.500" stroke="#3c3c00" stroke-width="1.500"/></svg><i class="sp"></i></a><a href="#"><svg class="ic" viewBox="0 0 20 20"><rect x="0" y="0" width="8" height="10.500" fill="#fff"/><rect x="8" y="2.500" width="9.500" height="8.500" fill="#b4b4b4"/><path d="M10.500 3v7.500M13.500 3v7.500" stroke="#8c8c8c" stroke-width="1.200"/><path d="M4 5.500v6" stroke="#505050" stroke-width="2.200"/><path d="M4 5.200h5" stroke="#8c8c8c" stroke-width="1.200"/><ellipse cx="9.500" cy="14.800" rx="8.800" ry="2.900" fill="#b6b60a"/><path d="M1 15.800q8.500 4 17.500 0" fill="none" stroke="#5c5c08" stroke-width="1.500"/><rect x="17.300" y="5.500" width="2" height="10.500" fill="#3c3c10"/></svg><i class="sp" style="width:5px"></i></a><a href="#"><svg class="ic" viewBox="0 0 20 20"><rect width="20" height="20" fill="#62620a"/><rect x="3" y="3" width="14" height="14" fill="#ffff58"/><path d="M5 17v-5.500l5.500-5.500 5.500 5.500v5.500z" fill="#f8f8f0"/><path d="M3.500 10l5-5" stroke="#0c0c00" stroke-width="3.200"/><circle cx="14.300" cy="6.300" r="2" fill="#1e1e08"/><rect x="6" y="12.500" width="2.400" height="4.500" fill="#5a5a30"/></svg></a></span></fieldset>
<fieldset class=" b" style="left:1842.25px;top:344px;width:163.3px;height:91px;padding:2px 9px 0 9px"><legend style="font-size:11.4px">Julien Mercier - (001)</legend>(1735 - 1789)<br>Cosnil - 19150<br><span class="icl" style="margin-top:2px"><a href="#"><svg class="ic" viewBox="0 0 20 20"><rect width="20" height="20" fill="#62620a"/><rect x="3" y="3" width="14" height="14" fill="#ffff58"/><path d="M4 17v-5.500l5.500-5.500 5.500 5.500v5.500z" fill="#f8f8f0"/><path d="M16.500 10l-5-5" stroke="#0c0c00" stroke-width="3.200"/><circle cx="5.700" cy="6.300" r="2" fill="#1e1e08"/><rect x="11.600" y="12.500" width="2.400" height="4.500" fill="#5a5a30"/></svg><i class="sp" style="width:5px"></i></a><a href="#"><svg class="ic" viewBox="0 0 20 20"><rect x="0" y="0" width="8" height="10.500" fill="#fff"/><rect x="8" y="2.500" width="9.500" height="8.500" fill="#b4b4b4"/><path d="M10.500 3v7.500M13.500 3v7.500" stroke="#8c8c8c" stroke-width="1.200"/><path d="M4 5.500v6" stroke="#505050" stroke-width="2.200"/><path d="M4 5.200h5" stroke="#8c8c8c" stroke-width="1.200"/><ellipse cx="9.500" cy="14.800" rx="8.800" ry="2.900" fill="#b6b60a"/><path d="M1 15.800q8.500 4 17.500 0" fill="none" stroke="#5c5c08" stroke-width="1.500"/><rect x="17.300" y="5.500" width="2" height="10.500" fill="#3c3c10"/></svg><i class="sp"></i></a><a href="#"><svg class="ic" viewBox="0 0 20 20"><rect width="20" height="20" fill="#fff"/><path d="M10 1l9 9-9 9-9-9z" fill="#e8e812" stroke="#7e7e00" stroke-width="2.600"/><ellipse cx="10.300" cy="7.600" rx="2.100" ry="2.900" fill="#141400"/><path d="M10.300 9v3.500" stroke="#3c3c00" stroke-width="1.500"/></svg><i class="sp"></i></a><a href="#"><svg class="ic" style="width:22px" viewBox="0 0 22 20"><rect x="0" y="0" width="22" height="20" fill="#fff"/><circle cx="5.200" cy="2.400" r="2.100" fill="#0c0c0c"/><path d="M1.300 5.600h7.800v6.400h-1.500v8h-4.800v-8h-1.500z" fill="#0c0c0c"/><circle cx="16.200" cy="2.400" r="2.100" fill="#1c1c1c"/><path d="M13 5.600h6.400l1.300 4.400h-1.700l1.700 6h-2.600v4h-3.800v-4h-2.600l1.700-6h-1.700z" fill="#1c1c1c"/></svg></a></span></fieldset>
<fieldset class=" b" style="left:2242.25px;top:344px;width:163.3px;height:103.5px;padding:2px 9px 0 9px"><legend style="font-size:11.4px">Jeanne Reynal - (001)</legend>(1734 - xxxx)<br>&nbsp;<br><span class="icl" style="margin-top:2px"><a href="#"><svg class="ic" viewBox="0 0 20 20"><rect width="20" height="20" fill="#62620a"/><rect x="3" y="3" width="14" height="14" fill="#ffff58"/><path d="M4 17v-5.500l5.500-5.500 5.500 5.500v5.500z" fill="#f8f8f0"/><path d="M16.500 10l-5-5" stroke="#0c0c00" stroke-width="3.200"/><circle cx="5.700" cy="6.300" r="2" fill="#1e1e08"/><rect x="11.600" y="12.500" width="2.400" height="4.500" fill="#5a5a30"/></svg><i class="sp" style="width:5px"></i></a><a href="#"><svg class="ic" viewBox="0 0 20 20"><rect x="0" y="0" width="8" height="10.500" fill="#fff"/><rect x="8" y="2.500" width="9.500" height="8.500" fill="#b4b4b4"/><path d="M10.500 3v7.500M13.500 3v7.500" stroke="#8c8c8c" stroke-width="1.200"/><path d="M4 5.500v6" stroke="#505050" stroke-width="2.200"/><path d="M4 5.200h5" stroke="#8c8c8c" stroke-width="1.200"/><ellipse cx="9.500" cy="14.800" rx="8.800" ry="2.900" fill="#b6b60a"/><path d="M1 15.800q8.500 4 17.500 0" fill="none" stroke="#5c5c08" stroke-width="1.500"/><rect x="17.300" y="5.500" width="2" height="10.500" fill="#3c3c10"/></svg><i class="sp"></i></a><a href="#"><svg class="ic" viewBox="0 0 20 20"><rect width="20" height="20" fill="#fff"/><path d="M10 1l9 9-9 9-9-9z" fill="#e8e812" stroke="#7e7e00" stroke-width="2.600"/><ellipse cx="10.300" cy="7.600" rx="2.100" ry="2.900" fill="#141400"/><path d="M10.300 9v3.500" stroke="#3c3c00" stroke-width="1.500"/></svg><i class="sp"></i></a><a href="#"><svg class="ic" style="width:22px" viewBox="0 0 22 20"><rect x="0" y="0" width="22" height="20" fill="#fff"/><circle cx="5.200" cy="2.400" r="2.100" fill="#0c0c0c"/><path d="M1.300 5.600h7.800v6.400h-1.500v8h-4.800v-8h-1.500z" fill="#0c0c0c"/><circle cx="16.200" cy="2.400" r="2.100" fill="#1c1c1c"/><path d="M13 5.600h6.400l1.300 4.400h-1.700l1.700 6h-2.600v4h-3.800v-4h-2.600l1.700-6h-1.700z" fill="#1c1c1c"/></svg></a></span></fieldset>
<fieldset class="pk b" style="left:2642.25px;top:344px;width:163.3px;height:103.5px;padding:2px 9px 0 9px"><legend style="font-size:11.4px">Nicolas Jugland - (002b)</legend>(17xx - xxxx)<br>&nbsp;<br><span class="icl" style="margin-top:2px"><a href="#"><svg class="ic" viewBox="0 0 20 20"><rect width="20" height="20" fill="#62620a"/><rect x="3" y="3" width="14" height="14" fill="#ffff58"/><path d="M4 17v-5.500l5.500-5.500 5.500 5.500v5.500z" fill="#f8f8f0"/><path d="M16.500 10l-5-5" stroke="#0c0c00" stroke-width="3.200"/><circle cx="5.700" cy="6.300" r="2" fill="#1e1e08"/><rect x="11.600" y="12.500" width="2.400" height="4.500" fill="#5a5a30"/></svg><i class="sp" style="width:5px"></i></a><a href="#"><svg class="ic" viewBox="0 0 20 20"><rect x="0" y="0" width="8" height="10.500" fill="#fff"/><rect x="8" y="2.500" width="9.500" height="8.500" fill="#b4b4b4"/><path d="M10.500 3v7.500M13.500 3v7.500" stroke="#8c8c8c" stroke-width="1.200"/><path d="M4 5.500v6" stroke="#505050" stroke-width="2.200"/><path d="M4 5.200h5" stroke="#8c8c8c" stroke-width="1.200"/><ellipse cx="9.500" cy="14.800" rx="8.800" ry="2.900" fill="#b6b60a"/><path d="M1 15.800q8.500 4 17.500 0" fill="none" stroke="#5c5c08" stroke-width="1.500"/><rect x="17.300" y="5.500" width="2" height="10.500" fill="#3c3c10"/></svg><i class="sp"></i></a><a href="#"><svg class="ic" viewBox="0 0 20 20"><rect width="20" height="20" fill="#fff"/><path d="M10 1l9 9-9 9-9-9z" fill="#e8e812" stroke="#7e7e00" stroke-width="2.600"/><ellipse cx="10.300" cy="7.600" rx="2.100" ry="2.900" fill="#141400"/><path d="M10.300 9v3.500" stroke="#3c3c00" stroke-width="1.500"/></svg><i class="sp"></i></a><a href="#"><svg class="ic" style="width:22px" viewBox="0 0 22 20"><rect x="0" y="0" width="22" height="20" fill="#fff"/><circle cx="5.200" cy="2.400" r="2.100" fill="#0c0c0c"/><path d="M1.300 5.600h7.800v6.400h-1.500v8h-4.800v-8h-1.500z" fill="#0c0c0c"/><circle cx="16.200" cy="2.400" r="2.100" fill="#1c1c1c"/><path d="M13 5.600h6.400l1.300 4.400h-1.700l1.700 6h-2.600v4h-3.800v-4h-2.600l1.700-6h-1.700z" fill="#1c1c1c"/></svg></a></span></fieldset>
<fieldset class="pk b" style="left:3042.25px;top:344px;width:163.3px;height:103.5px;padding:2px 9px 0 9px"><legend style="font-size:11.4px">Anne Dupuis - (002b)</legend>(1747 - 1771)<br>Villières [Aubazine] -<br>19190<br><span class="icl" style="margin-top:2px"><a href="#"><svg class="ic" viewBox="0 0 20 20"><rect width="20" height="20" fill="#62620a"/><rect x="3" y="3" width="14" height="14" fill="#ffff58"/><path d="M4 17v-5.500l5.500-5.500 5.500 5.500v5.500z" fill="#f8f8f0"/><path d="M16.500 10l-5-5" stroke="#0c0c00" stroke-width="3.200"/><circle cx="5.700" cy="6.300" r="2" fill="#1e1e08"/><rect x="11.600" y="12.500" width="2.400" height="4.500" fill="#5a5a30"/></svg><i class="sp" style="width:5px"></i></a><a href="#"><svg class="ic" viewBox="0 0 20 20"><rect x="0" y="0" width="8" height="10.500" fill="#fff"/><rect x="8" y="2.500" width="9.500" height="8.500" fill="#b4b4b4"/><path d="M10.500 3v7.500M13.500 3v7.500" stroke="#8c8c8c" stroke-width="1.200"/><path d="M4 5.500v6" stroke="#505050" stroke-width="2.200"/><path d="M4 5.200h5" stroke="#8c8c8c" stroke-width="1.200"/><ellipse cx="9.500" cy="14.800" rx="8.800" ry="2.900" fill="#b6b60a"/><path d="M1 15.800q8.500 4 17.500 0" fill="none" stroke="#5c5c08" stroke-width="1.500"/><rect x="17.300" y="5.500" width="2" height="10.500" fill="#3c3c10"/></svg><i class="sp"></i></a><a href="#"><svg class="ic" viewBox="0 0 20 20"><rect width="20" height="20" fill="#fff"/><path d="M10 1l9 9-9 9-9-9z" fill="#e8e812" stroke="#7e7e00" stroke-width="2.600"/><ellipse cx="10.300" cy="7.600" rx="2.100" ry="2.900" fill="#141400"/><path d="M10.300 9v3.500" stroke="#3c3c00" stroke-width="1.500"/></svg><i class="sp"></i></a><a href="#"><svg class="ic" style="width:22px" viewBox="0 0 22 20"><rect x="0" y="0" width="22" height="20" fill="#fff"/><circle cx="5.200" cy="2.400" r="2.100" fill="#0c0c0c"/><path d="M1.300 5.600h7.800v6.400h-1.500v8h-4.800v-8h-1.500z" fill="#0c0c0c"/><circle cx="16.200" cy="2.400" r="2.100" fill="#1c1c1c"/><path d="M13 5.600h6.400l1.300 4.400h-1.700l1.700 6h-2.600v4h-3.800v-4h-2.600l1.700-6h-1.700z" fill="#1c1c1c"/></svg></a></span></fieldset>
<div class="ln" style="left:393.05px;top:380px;width:246.7px;height:5px"></div>
<div class="ln" style="left:515px;top:382.5px;width:5px;height:105.5px"></div>
<div class="ln" style="left:1205.55px;top:380px;width:221.7px;height:5px"></div>
<div class="ln" style="left:1327.8px;top:382.5px;width:5px;height:105.5px"></div>
<div class="ln" style="left:2005.55px;top:380px;width:234.2px;height:5px"></div>
<div class="ln" style="left:2127.8px;top:382.5px;width:5px;height:105.5px"></div>
<div class="ln" style="left:2805.55px;top:380px;width:234.2px;height:5px"></div>
<div class="ln" style="left:2927.8px;top:382.5px;width:5px;height:105.5px"></div>
<fieldset class=" b" style="left:417.2px;top:481px;width:226px;height:103.5px;padding:4px 9px 0 9px"><legend class="big"><span class="dn">François Chabrignac - (001)</span></legend>(1769 - xxxx)<br>Palazinges - 19156<br><span class="icl" style="margin-top:0.5px"><a href="#"><svg class="ic" style="width:22px" viewBox="0 0 22 20"><rect x="0" y="0" width="22" height="20" fill="#fff"/><circle cx="5.200" cy="2.400" r="2.100" fill="#0c0c0c"/><path d="M1.300 5.600h7.800v6.400h-1.500v8h-4.800v-8h-1.500z" fill="#0c0c0c"/><circle cx="16.200" cy="2.400" r="2.100" fill="#1c1c1c"/><path d="M13 5.600h6.400l1.300 4.400h-1.700l1.700 6h-2.600v4h-3.800v-4h-2.600l1.700-6h-1.700z" fill="#1c1c1c"/></svg><i class="sp"></i></a><a href="#"><svg class="ic" viewBox="0 0 20 20"><rect width="20" height="20" fill="#fff"/><path d="M10 1l9 9-9 9-9-9z" fill="#e8e812" stroke="#7e7e00" stroke-width="2.600"/><ellipse cx="10.300" cy="7.600" rx="2.100" ry="2.900" fill="#141400"/><path d="M10.300 9v3.500" stroke="#3c3c00" stroke-width="1.500"/></svg><i class="sp"></i></a><a href="#"><svg class="ic" viewBox="0 0 20 20"><rect x="0" y="0" width="8" height="10.500" fill="#fff"/><rect x="8" y="2.500" width="9.500" height="8.500" fill="#b4b4b4"/><path d="M10.500 3v7.500M13.500 3v7.500" stroke="#8c8c8c" stroke-width="1.200"/><path d="M4 5.500v6" stroke="#505050" stroke-width="2.200"/><path d="M4 5.200h5" stroke="#8c8c8c" stroke-width="1.200"/><ellipse cx="9.500" cy="14.800" rx="8.800" ry="2.900" fill="#b6b60a"/><path d="M1 15.800q8.500 4 17.500 0" fill="none" stroke="#5c5c08" stroke-width="1.500"/><rect x="17.300" y="5.500" width="2" height="10.500" fill="#3c3c10"/></svg><i class="sp" style="width:5px"></i></a><a href="#"><svg class="ic" viewBox="0 0 20 20"><rect width="20" height="20" fill="#62620a"/><rect x="3" y="3" width="14" height="14" fill="#ffff58"/><path d="M5 17v-5.500l5.500-5.500 5.500 5.500v5.500z" fill="#f8f8f0"/><path d="M3.500 10l5-5" stroke="#0c0c00" stroke-width="3.200"/><circle cx="14.300" cy="6.300" r="2" fill="#1e1e08"/><rect x="6" y="12.500" width="2.400" height="4.500" fill="#5a5a30"/></svg></a></span></fieldset>
<fieldset class=" b" style="left:1230px;top:481px;width:226px;height:103.5px;padding:4px 9px 0 9px"><legend class="big"><span class="dn">Marie Coste - (001)</span></legend>(1767 - xxxx)<br>Beynat - 19023<br><span class="icl" style="margin-top:0.5px"><a href="#"><svg class="ic" style="width:22px" viewBox="0 0 22 20"><rect x="0" y="0" width="22" height="20" fill="#fff"/><circle cx="5.200" cy="2.400" r="2.100" fill="#0c0c0c"/><path d="M1.300 5.600h7.800v6.400h-1.500v8h-4.800v-8h-1.500z" fill="#0c0c0c"/><circle cx="16.200" cy="2.400" r="2.100" fill="#1c1c1c"/><path d="M13 5.600h6.400l1.300 4.400h-1.700l1.700 6h-2.600v4h-3.800v-4h-2.600l1.700-6h-1.700z" fill="#1c1c1c"/></svg><i class="sp"></i></a><a href="#"><svg class="ic" viewBox="0 0 20 20"><rect width="20" height="20" fill="#fff"/><path d="M10 1l9 9-9 9-9-9z" fill="#e8e812" stroke="#7e7e00" stroke-width="2.600"/><ellipse cx="10.300" cy="7.600" rx="2.100" ry="2.900" fill="#141400"/><path d="M10.300 9v3.500" stroke="#3c3c00" stroke-width="1.500"/></svg><i class="sp"></i></a><a href="#"><svg class="ic" viewBox="0 0 20 20"><rect x="0" y="0" width="8" height="10.500" fill="#fff"/><rect x="8" y="2.500" width="9.500" height="8.500" fill="#b4b4b4"/><path d="M10.500 3v7.500M13.500 3v7.500" stroke="#8c8c8c" stroke-width="1.200"/><path d="M4 5.500v6" stroke="#505050" stroke-width="2.200"/><path d="M4 5.200h5" stroke="#8c8c8c" stroke-width="1.200"/><ellipse cx="9.500" cy="14.800" rx="8.800" ry="2.900" fill="#b6b60a"/><path d="M1 15.800q8.500 4 17.500 0" fill="none" stroke="#5c5c08" stroke-width="1.500"/><rect x="17.300" y="5.500" width="2" height="10.500" fill="#3c3c10"/></svg><i class="sp" style="width:5px"></i></a><a href="#"><svg class="ic" viewBox="0 0 20 20"><rect width="20" height="20" fill="#62620a"/><rect x="3" y="3" width="14" height="14" fill="#ffff58"/><path d="M5 17v-5.500l5.500-5.500 5.500 5.500v5.500z" fill="#f8f8f0"/><path d="M3.500 10l5-5" stroke="#0c0c00" stroke-width="3.200"/><circle cx="14.300" cy="6.300" r="2" fill="#1e1e08"/><rect x="6" y="12.500" width="2.400" height="4.500" fill="#5a5a30"/></svg></a></span></fieldset>
<fieldset class=" b" style="left:2030px;top:481px;width:226px;height:103.5px;padding:4px 9px 0 9px"><legend class="big"><span class="dn">Pierre Mercier - (001)</span></legend>(1764 - 1806)<br>Le Mons (Cosnil) - 19190<br><span class="icl" style="margin-top:0.5px"><a href="#"><svg class="ic" viewBox="0 0 20 20"><rect width="20" height="20" fill="#62620a"/><rect x="3" y="3" width="14" height="14" fill="#ffff58"/><path d="M4 17v-5.500l5.500-5.500 5.500 5.500v5.500z" fill="#f8f8f0"/><path d="M16.500 10l-5-5" stroke="#0c0c00" stroke-width="3.200"/><circle cx="5.700" cy="6.300" r="2" fill="#1e1e08"/><rect x="11.600" y="12.500" width="2.400" height="4.500" fill="#5a5a30"/></svg><i class="sp" style="width:5px"></i></a><a href="#"><svg class="ic" viewBox="0 0 20 20"><rect x="0" y="0" width="8" height="10.500" fill="#fff"/><rect x="8" y="2.500" width="9.500" height="8.500" fill="#b4b4b4"/><path d="M10.500 3v7.500M13.500 3v7.500" stroke="#8c8c8c" stroke-width="1.200"/><path d="M4 5.500v6" stroke="#505050" stroke-width="2.200"/><path d="M4 5.200h5" stroke="#8c8c8c" stroke-width="1.200"/><ellipse cx="9.500" cy="14.800" rx="8.800" ry="2.900" fill="#b6b60a"/><path d="M1 15.800q8.500 4 17.500 0" fill="none" stroke="#5c5c08" stroke-width="1.500"/><rect x="17.300" y="5.500" width="2" height="10.500" fill="#3c3c10"/></svg><i class="sp"></i></a><a href="#"><svg class="ic" viewBox="0 0 20 20"><rect width="20" height="20" fill="#fff"/><path d="M10 1l9 9-9 9-9-9z" fill="#e8e812" stroke="#7e7e00" stroke-width="2.600"/><ellipse cx="10.300" cy="7.600" rx="2.100" ry="2.900" fill="#141400"/><path d="M10.300 9v3.500" stroke="#3c3c00" stroke-width="1.500"/></svg><i class="sp"></i></a><a href="#"><svg class="ic" style="width:22px" viewBox="0 0 22 20"><rect x="0" y="0" width="22" height="20" fill="#fff"/><circle cx="5.200" cy="2.400" r="2.100" fill="#0c0c0c"/><path d="M1.300 5.600h7.800v6.400h-1.500v8h-4.800v-8h-1.500z" fill="#0c0c0c"/><circle cx="16.200" cy="2.400" r="2.100" fill="#1c1c1c"/><path d="M13 5.600h6.400l1.300 4.400h-1.700l1.700 6h-2.600v4h-3.800v-4h-2.600l1.700-6h-1.700z" fill="#1c1c1c"/></svg></a></span></fieldset>
<fieldset class="pk b" style="left:2830px;top:481px;width:226px;height:103.5px;padding:4px 9px 0 9px"><legend class="big"><span class="dn">Jeanne Jugland - (002b)</span></legend>(1768 - xxxx)<br>Rochecoux (Cosnil) - 19190<br><span class="icl" style="margin-top:0.5px"><a href="#"><svg class="ic" viewBox="0 0 20 20"><rect width="20" height="20" fill="#62620a"/><rect x="3" y="3" width="14" height="14" fill="#ffff58"/><path d="M4 17v-5.500l5.500-5.500 5.500 5.500v5.500z" fill="#f8f8f0"/><path d="M16.500 10l-5-5" stroke="#0c0c00" stroke-width="3.200"/><circle cx="5.700" cy="6.300" r="2" fill="#1e1e08"/><rect x="11.600" y="12.500" width="2.400" height="4.500" fill="#5a5a30"/></svg><i class="sp" style="width:5px"></i></a><a href="#"><svg class="ic" viewBox="0 0 20 20"><rect x="0" y="0" width="8" height="10.500" fill="#fff"/><rect x="8" y="2.500" width="9.500" height="8.500" fill="#b4b4b4"/><path d="M10.500 3v7.500M13.500 3v7.500" stroke="#8c8c8c" stroke-width="1.200"/><path d="M4 5.500v6" stroke="#505050" stroke-width="2.200"/><path d="M4 5.200h5" stroke="#8c8c8c" stroke-width="1.200"/><ellipse cx="9.500" cy="14.800" rx="8.800" ry="2.900" fill="#b6b60a"/><path d="M1 15.800q8.500 4 17.500 0" fill="none" stroke="#5c5c08" stroke-width="1.500"/><rect x="17.300" y="5.500" width="2" height="10.500" fill="#3c3c10"/></svg><i class="sp"></i></a><a href="#"><svg class="ic" viewBox="0 0 20 20"><rect width="20" height="20" fill="#fff"/><path d="M10 1l9 9-9 9-9-9z" fill="#e8e812" stroke="#7e7e00" stroke-width="2.600"/><ellipse cx="10.300" cy="7.600" rx="2.100" ry="2.900" fill="#141400"/><path d="M10.300 9v3.500" stroke="#3c3c00" stroke-width="1.500"/></svg><i class="sp"></i></a><a href="#"><svg class="ic" style="width:22px" viewBox="0 0 22 20"><rect x="0" y="0" width="22" height="20" fill="#fff"/><circle cx="5.200" cy="2.400" r="2.100" fill="#0c0c0c"/><path d="M1.300 5.600h7.800v6.400h-1.500v8h-4.800v-8h-1.500z" fill="#0c0c0c"/><circle cx="16.200" cy="2.400" r="2.100" fill="#1c1c1c"/><path d="M13 5.600h6.400l1.300 4.400h-1.700l1.700 6h-2.600v4h-3.800v-4h-2.600l1.700-6h-1.700z" fill="#1c1c1c"/></svg></a></span></fieldset>
<div class="ln" style="left:643.2px;top:517px;width:584.3px;height:5px"></div>
<div class="ln" style="left:915px;top:519.5px;width:5px;height:93.5px"></div>
<div class="ln" style="left:2256px;top:517px;width:571.5px;height:5px"></div>
<div class="ln" style="left:2502.8px;top:519.5px;width:5px;height:93.5px"></div>
<fieldset class=" b" style="left:817.2px;top:606px;width:213.4px;height:103.5px;padding:4px 9px 0 9px"><legend class="big"><span class="dn">Jean Chabrignac - (001)</span></legend>(1789 - 1847)<br>Palazinges - 19156<br><span class="icl" style="margin-top:0.5px"><a href="#"><svg class="ic" style="width:22px" viewBox="0 0 22 20"><rect x="0" y="0" width="22" height="20" fill="#fff"/><circle cx="5.200" cy="2.400" r="2.100" fill="#0c0c0c"/><path d="M1.300 5.600h7.800v6.400h-1.500v8h-4.800v-8h-1.500z" fill="#0c0c0c"/><circle cx="16.200" cy="2.400" r="2.100" fill="#1c1c1c"/><path d="M13 5.600h6.400l1.300 4.400h-1.700l1.700 6h-2.600v4h-3.800v-4h-2.600l1.700-6h-1.700z" fill="#1c1c1c"/></svg><i class="sp"></i></a><a href="#"><svg class="ic" viewBox="0 0 20 20"><rect width="20" height="20" fill="#fff"/><path d="M10 1l9 9-9 9-9-9z" fill="#e8e812" stroke="#7e7e00" stroke-width="2.600"/><ellipse cx="10.300" cy="7.600" rx="2.100" ry="2.900" fill="#141400"/><path d="M10.300 9v3.500" stroke="#3c3c00" stroke-width="1.500"/></svg><i class="sp"></i></a><a href="#"><svg class="ic" viewBox="0 0 20 20"><rect x="0" y="0" width="8" height="10.500" fill="#fff"/><rect x="8" y="2.500" width="9.500" height="8.500" fill="#b4b4b4"/><path d="M10.500 3v7.500M13.500 3v7.500" stroke="#8c8c8c" stroke-width="1.200"/><path d="M4 5.500v6" stroke="#505050" stroke-width="2.200"/><path d="M4 5.200h5" stroke="#8c8c8c" stroke-width="1.200"/><ellipse cx="9.500" cy="14.800" rx="8.800" ry="2.900" fill="#b6b60a"/><path d="M1 15.800q8.500 4 17.500 0" fill="none" stroke="#5c5c08" stroke-width="1.500"/><rect x="17.300" y="5.500" width="2" height="10.500" fill="#3c3c10"/></svg><i class="sp" style="width:5px"></i></a><a href="#"><svg class="ic" viewBox="0 0 20 20"><rect width="20" height="20" fill="#62620a"/><rect x="3" y="3" width="14" height="14" fill="#ffff58"/><path d="M5 17v-5.500l5.500-5.500 5.500 5.500v5.500z" fill="#f8f8f0"/><path d="M3.500 10l5-5" stroke="#0c0c00" stroke-width="3.200"/><circle cx="14.300" cy="6.300" r="2" fill="#1e1e08"/><rect x="6" y="12.500" width="2.400" height="4.500" fill="#5a5a30"/></svg></a></span></fieldset>
<fieldset class=" b" style="left:2405px;top:606px;width:213.4px;height:103.5px;padding:4px 9px 0 9px"><legend class="big"><span class="dn">Françoise Mercier - (001)</span></legend>(1793 - 1849)<br>Aubazine - 19190<br><span class="icl" style="margin-top:0.5px"><a href="#"><svg class="ic" viewBox="0 0 20 20"><rect width="20" height="20" fill="#62620a"/><rect x="3" y="3" width="14" height="14" fill="#ffff58"/><path d="M4 17v-5.500l5.500-5.500 5.500 5.500v5.500z" fill="#f8f8f0"/><path d="M16.500 10l-5-5" stroke="#0c0c00" stroke-width="3.200"/><circle cx="5.700" cy="6.300" r="2" fill="#1e1e08"/><rect x="11.600" y="12.500" width="2.400" height="4.500" fill="#5a5a30"/></svg><i class="sp" style="width:5px"></i></a><a href="#"><svg class="ic" viewBox="0 0 20 20"><rect x="0" y="0" width="8" height="10.500" fill="#fff"/><rect x="8" y="2.500" width="9.500" height="8.500" fill="#b4b4b4"/><path d="M10.500 3v7.500M13.500 3v7.500" stroke="#8c8c8c" stroke-width="1.200"/><path d="M4 5.500v6" stroke="#505050" stroke-width="2.200"/><path d="M4 5.200h5" stroke="#8c8c8c" stroke-width="1.200"/><ellipse cx="9.500" cy="14.800" rx="8.800" ry="2.900" fill="#b6b60a"/><path d="M1 15.800q8.500 4 17.500 0" fill="none" stroke="#5c5c08" stroke-width="1.500"/><rect x="17.300" y="5.500" width="2" height="10.500" fill="#3c3c10"/></svg><i class="sp"></i></a><a href="#"><svg class="ic" viewBox="0 0 20 20"><rect width="20" height="20" fill="#fff"/><path d="M10 1l9 9-9 9-9-9z" fill="#e8e812" stroke="#7e7e00" stroke-width="2.600"/><ellipse cx="10.300" cy="7.600" rx="2.100" ry="2.900" fill="#141400"/><path d="M10.300 9v3.500" stroke="#3c3c00" stroke-width="1.500"/></svg><i class="sp"></i></a><a href="#"><svg class="ic" style="width:22px" viewBox="0 0 22 20"><rect x="0" y="0" width="22" height="20" fill="#fff"/><circle cx="5.200" cy="2.400" r="2.100" fill="#0c0c0c"/><path d="M1.300 5.600h7.800v6.400h-1.500v8h-4.800v-8h-1.500z" fill="#0c0c0c"/><circle cx="16.200" cy="2.400" r="2.100" fill="#1c1c1c"/><path d="M13 5.600h6.400l1.300 4.400h-1.700l1.700 6h-2.600v4h-3.800v-4h-2.600l1.700-6h-1.700z" fill="#1c1c1c"/></svg></a></span></fieldset>
<div class="ln" style="left:1030.6px;top:642px;width:1371.9px;height:5px"></div>
<div class="ln" style="left:1715px;top:644.5px;width:5px;height:68.5px"></div>
<fieldset class="or b" style="left:1617.2px;top:705.5px;width:213.4px;height:103.5px;padding:4px 9px 0 9px"><legend class="big"><span class="dn">Mathurine Chabrignac - 001</span></legend>(1819 - 1850)<br>Palazinges - 19190<br><span class="icl" style="margin-top:0.5px"><a href="#"><svg class="ic" style="width:22px" viewBox="0 0 22 20"><rect x="0" y="0" width="22" height="20" fill="#fff"/><circle cx="5.200" cy="2.400" r="2.100" fill="#0c0c0c"/><path d="M1.300 5.600h7.800v6.400h-1.500v8h-4.800v-8h-1.500z" fill="#0c0c0c"/><circle cx="16.200" cy="2.400" r="2.100" fill="#1c1c1c"/><path d="M13 5.600h6.400l1.300 4.400h-1.700l1.700 6h-2.600v4h-3.800v-4h-2.600l1.700-6h-1.700z" fill="#1c1c1c"/></svg><i class="sp"></i></a><a href="#"><svg class="ic" viewBox="0 0 20 20"><rect width="20" height="20" fill="#fff"/><path d="M10 1l9 9-9 9-9-9z" fill="#e8e812" stroke="#7e7e00" stroke-width="2.600"/><ellipse cx="10.300" cy="7.600" rx="2.100" ry="2.900" fill="#141400"/><path d="M10.300 9v3.500" stroke="#3c3c00" stroke-width="1.500"/></svg><i class="sp"></i></a><a href="#"><svg class="ic" viewBox="0 0 20 20"><rect x="0" y="0" width="8" height="10.500" fill="#fff"/><rect x="8" y="2.500" width="9.500" height="8.500" fill="#b4b4b4"/><path d="M10.500 3v7.500M13.500 3v7.500" stroke="#8c8c8c" stroke-width="1.200"/><path d="M4 5.500v6" stroke="#505050" stroke-width="2.200"/><path d="M4 5.200h5" stroke="#8c8c8c" stroke-width="1.200"/><ellipse cx="9.500" cy="14.800" rx="8.800" ry="2.900" fill="#b6b60a"/><path d="M1 15.800q8.500 4 17.500 0" fill="none" stroke="#5c5c08" stroke-width="1.500"/><rect x="17.300" y="5.500" width="2" height="10.500" fill="#3c3c10"/></svg></a></span></fieldset>
<fieldset class="ol b" style="left:2667.2px;top:618px;width:238.1px;height:91.5px;padding:4px 9px 0 9px"><legend class="big"><span class="dn">Pierre Jardel - (001)</span></legend>(1783 - 1834)<br>Vergonzac [Cosnil] - 19190<br><span class="icl" style="margin-top:0.5px"><a href="#"><svg class="ic" viewBox="0 0 20 20"><rect width="20" height="20" fill="#62620a"/><rect x="3" y="3" width="14" height="14" fill="#ffff58"/><path d="M4 17v-5.500l5.500-5.500 5.500 5.500v5.500z" fill="#f8f8f0"/><path d="M16.500 10l-5-5" stroke="#0c0c00" stroke-width="3.200"/><circle cx="5.700" cy="6.300" r="2" fill="#1e1e08"/><rect x="11.600" y="12.500" width="2.400" height="4.500" fill="#5a5a30"/></svg><i class="sp" style="width:5px"></i></a><a href="#"><svg class="ic" viewBox="0 0 20 20"><rect x="0" y="0" width="8" height="10.500" fill="#fff"/><rect x="8" y="2.500" width="9.500" height="8.500" fill="#b4b4b4"/><path d="M10.500 3v7.500M13.500 3v7.500" stroke="#8c8c8c" stroke-width="1.200"/><path d="M4 5.500v6" stroke="#505050" stroke-width="2.200"/><path d="M4 5.200h5" stroke="#8c8c8c" stroke-width="1.200"/><ellipse cx="9.500" cy="14.800" rx="8.800" ry="2.900" fill="#b6b60a"/><path d="M1 15.800q8.500 4 17.500 0" fill="none" stroke="#5c5c08" stroke-width="1.500"/><rect x="17.300" y="5.500" width="2" height="10.500" fill="#3c3c10"/></svg><i class="sp"></i></a><a href="#"><svg class="ic" viewBox="0 0 20 20"><rect width="20" height="20" fill="#fff"/><path d="M10 1l9 9-9 9-9-9z" fill="#e8e812" stroke="#7e7e00" stroke-width="2.600"/><ellipse cx="10.300" cy="7.600" rx="2.100" ry="2.900" fill="#141400"/><path d="M10.300 9v3.500" stroke="#3c3c00" stroke-width="1.500"/></svg><i class="sp"></i></a><a href="#"><svg class="ic" style="width:22px" viewBox="0 0 22 20"><rect x="0" y="0" width="22" height="20" fill="#fff"/><circle cx="5.200" cy="2.400" r="2.100" fill="#0c0c0c"/><path d="M1.300 5.600h7.800v6.400h-1.500v8h-4.800v-8h-1.500z" fill="#0c0c0c"/><circle cx="16.200" cy="2.400" r="2.100" fill="#1c1c1c"/><path d="M13 5.600h6.400l1.300 4.400h-1.700l1.700 6h-2.600v4h-3.800v-4h-2.600l1.700-6h-1.700z" fill="#1c1c1c"/></svg></a></span></fieldset>
<fieldset class="ol b" style="left:2917.1px;top:618px;width:238.1px;height:91.5px;padding:4px 9px 0 9px"><legend class="big"><span class="dn">Toinette Pignol - (001)</span></legend>(1791 - 1858)<br>Paypertus (St-Hilaire-Peyroux) - 19560<br><span class="icl" style="margin-top:0.5px"><a href="#"><svg class="ic" viewBox="0 0 20 20"><rect width="20" height="20" fill="#62620a"/><rect x="3" y="3" width="14" height="14" fill="#ffff58"/><path d="M4 17v-5.500l5.500-5.500 5.500 5.500v5.500z" fill="#f8f8f0"/><path d="M16.500 10l-5-5" stroke="#0c0c00" stroke-width="3.200"/><circle cx="5.700" cy="6.300" r="2" fill="#1e1e08"/><rect x="11.600" y="12.500" width="2.400" height="4.500" fill="#5a5a30"/></svg><i class="sp" style="width:5px"></i></a><a href="#"><svg class="ic" viewBox="0 0 20 20"><rect x="0" y="0" width="8" height="10.500" fill="#fff"/><rect x="8" y="2.500" width="9.500" height="8.500" fill="#b4b4b4"/><path d="M10.500 3v7.500M13.500 3v7.500" stroke="#8c8c8c" stroke-width="1.200"/><path d="M4 5.500v6" stroke="#505050" stroke-width="2.200"/><path d="M4 5.200h5" stroke="#8c8c8c" stroke-width="1.200"/><ellipse cx="9.500" cy="14.800" rx="8.800" ry="2.900" fill="#b6b60a"/><path d="M1 15.800q8.500 4 17.500 0" fill="none" stroke="#5c5c08" stroke-width="1.500"/><rect x="17.300" y="5.500" width="2" height="10.500" fill="#3c3c10"/></svg><i class="sp"></i></a><a href="#"><svg class="ic" viewBox="0 0 20 20"><rect width="20" height="20" fill="#fff"/><path d="M10 1l9 9-9 9-9-9z" fill="#e8e812" stroke="#7e7e00" stroke-width="2.600"/><ellipse cx="10.300" cy="7.600" rx="2.100" ry="2.900" fill="#141400"/><path d="M10.300 9v3.500" stroke="#3c3c00" stroke-width="1.500"/></svg><i class="sp"></i></a><a href="#"><svg class="ic" style="width:22px" viewBox="0 0 22 20"><rect x="0" y="0" width="22" height="20" fill="#fff"/><circle cx="5.200" cy="2.400" r="2.100" fill="#0c0c0c"/><path d="M1.300 5.600h7.800v6.400h-1.500v8h-4.800v-8h-1.500z" fill="#0c0c0c"/><circle cx="16.200" cy="2.400" r="2.100" fill="#1c1c1c"/><path d="M13 5.600h6.400l1.300 4.400h-1.700l1.700 6h-2.600v4h-3.800v-4h-2.600l1.700-6h-1.700z" fill="#1c1c1c"/></svg></a></span></fieldset>
<div class="ln" style="left:2905px;top:654.5px;width:9.5px;height:3px"></div>
<fieldset class=" b" style="left:2804.6px;top:730.5px;width:213.4px;height:103.5px;padding:4px 9px 0 9px"><legend class="big"><span class="dn">Jean Jardel - (001)</span></legend>(1816 - 1852)<br>Aubazine - 19190<br><span class="icl" style="margin-top:0.5px"><a href="#"><svg class="ic" style="height:18px" viewBox="0 0 20 18"><rect width="20" height="18" fill="#0c1230"/><rect x="1.600" y="1.600" width="16.800" height="14.800" fill="#fff"/><path d="M9.500 3.200h8v2.200h-8zM11.500 7.900h6v2.200h-6zM9.500 12.600h8v2.200h-8z" fill="#3a5cd6"/><path d="M2.600 9l5.800-5.600v3.600h3v4h-3v3.600z" fill="#10247a"/></svg><i class="sp" style="width:5px"></i></a><a href="#"><svg class="ic" viewBox="0 0 20 20"><rect x="0" y="0" width="8" height="10.500" fill="#fff"/><rect x="8" y="2.500" width="9.500" height="8.500" fill="#b4b4b4"/><path d="M10.500 3v7.500M13.500 3v7.500" stroke="#8c8c8c" stroke-width="1.200"/><path d="M4 5.500v6" stroke="#505050" stroke-width="2.200"/><path d="M4 5.200h5" stroke="#8c8c8c" stroke-width="1.200"/><ellipse cx="9.500" cy="14.800" rx="8.800" ry="2.900" fill="#b6b60a"/><path d="M1 15.800q8.500 4 17.500 0" fill="none" stroke="#5c5c08" stroke-width="1.500"/><rect x="17.300" y="5.500" width="2" height="10.500" fill="#3c3c10"/></svg><i class="sp"></i></a><a href="#"><svg class="ic" viewBox="0 0 20 20"><rect width="20" height="20" fill="#fff"/><path d="M10 1l9 9-9 9-9-9z" fill="#e8e812" stroke="#7e7e00" stroke-width="2.600"/><ellipse cx="10.300" cy="7.600" rx="2.100" ry="2.900" fill="#141400"/><path d="M10.300 9v3.500" stroke="#3c3c00" stroke-width="1.500"/></svg><i class="sp"></i></a><a href="#"><svg class="ic" style="width:22px" viewBox="0 0 22 20"><rect x="0" y="0" width="22" height="20" fill="#fff"/><circle cx="5.200" cy="2.400" r="2.100" fill="#0c0c0c"/><path d="M1.300 5.600h7.800v6.400h-1.500v8h-4.800v-8h-1.500z" fill="#0c0c0c"/><circle cx="16.200" cy="2.400" r="2.100" fill="#1c1c1c"/><path d="M13 5.600h6.400l1.300 4.400h-1.700l1.700 6h-2.600v4h-3.800v-4h-2.600l1.700-6h-1.700z" fill="#1c1c1c"/></svg></a></span></fieldset>
<div class="ln" style="left:1830px;top:754.7px;width:972px;height:3px"></div>
<div class="ln" style="left:2339.9px;top:756px;width:3px;height:19px"></div>
<fieldset class="ol b" style="left:2217.5px;top:769px;width:312.3px;height:58.5px;padding-top:2px"><legend style="font-size:12.4px">[Enfants]</legend>1 - <a href="#" class="v">Toinette</a> Jardel - "Lignée directrice"<br>2 - <a href="#">François</a> Jardel</fieldset>
<div class="mt" style="left:296.5px;top:166px;font-size:10px">Mariage le 28/08/1716</div>
<div class="mt" style="left:296.75px;top:180.5px;font-size:10px">à Palazinges - 19156</div>
<div class="mt" style="left:1908.75px;top:166px;font-size:10px">Mariage le 28/08/1730</div>
<div class="mt" style="left:1908.5px;top:180.5px;font-size:10px">à Le Mons (Cosnil) - 19190</div>
<div class="mt" style="left:2709.5px;top:166px;font-size:10px">Mariage le 00/00/1724</div>
<div class="mt" style="left:2709.38px;top:180.5px;font-size:10px">à Rochecoux (Cosnil) - 19190</div>
<div class="mt" style="left:509.25px;top:342px;font-size:11px">Mariage le 07/06/1750</div>
<div class="mt" style="left:513.25px;top:357px;font-size:11px">à Palazinges - 19156</div>
<div class="mt" style="left:1321.88px;top:342px;font-size:11px">Mariage le 17/11/1756</div>
<div class="mt" style="left:1321.88px;top:357px;font-size:11px">à Beynat - 19023</div>
<div class="mt" style="left:2120px;top:342px;font-size:11px">Mariage le 01/02/1758</div>
<div class="mt" style="left:2120px;top:357px;font-size:11px">à Le Mons (Cosnil) - 19190</div>
<div class="mt" style="left:2921.25px;top:342px;font-size:11px">Mariage le 19/02/1767</div>
<div class="mt" style="left:2921.25px;top:357px;font-size:11px">à Rochecoux (Cosnil) - 19190</div>
<div class="mt" style="left:1014.38px;top:492px;font-size:11px">Mariage le 20/02/1786</div>
<div class="mt" style="left:1020.5px;top:507px;font-size:11px">à Palazinges - 19156</div>
<div class="mt" style="left:2554.25px;top:492px;font-size:11px">Mariage le 09/02/1790</div>
<div class="mt" style="left:2567.5px;top:507px;font-size:11px">à Rochecoux (Cosnil) - 19190</div>
<div class="mt" style="left:1708.5px;top:612px;font-size:11px">Mariage le 24/06/1813</div>
<div class="mt" style="left:1708.75px;top:627px;font-size:11px">à Palazinges - 19156</div>
<div class="mt" style="left:2182.75px;top:723.875px;font-size:11px">Mariage le 29/11/1843</div>
<div class="mt" style="left:2182.75px;top:738.875px;font-size:11px">à Palazinges - 19190</div>
</div></body></html>
